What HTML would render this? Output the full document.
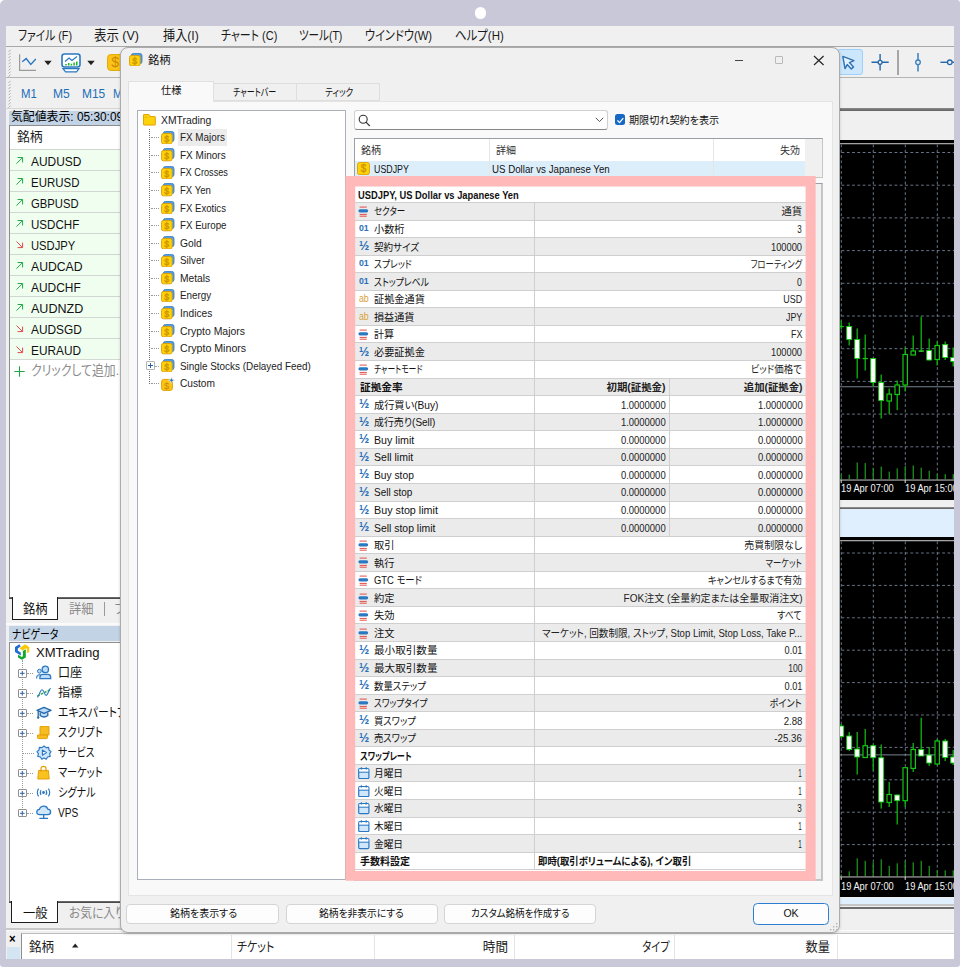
<!DOCTYPE html>
<html lang="ja"><head><meta charset="utf-8"><title>銘柄</title>
<style>
html,body{margin:0;padding:0;background:#fff;}
body{width:960px;height:968px;position:relative;overflow:hidden;font-family:"Liberation Sans", "Noto Sans CJK JP", sans-serif;}
.frame{position:absolute;left:0;top:0;width:960px;height:966.8px;background:#c8c8d8;border-radius:5px 3px 3px 3px;}
.cam{position:absolute;left:474.5px;top:7px;width:11.5px;height:11.5px;border-radius:50%;background:#fff;}
.screen{position:absolute;left:6px;top:26px;width:948px;height:933px;overflow:hidden;background:#f0f0f0;}
.abs{position:absolute;left:-6px;top:-26px;width:960px;height:968px;}
.abs div,.abs svg,.abs span{position:absolute;box-sizing:border-box;}
.t{white-space:nowrap;font-feature-settings:"palt";}
</style></head>
<body>
<div class="frame"></div><div class="cam"></div>
<div class="screen"><div class="abs">
<div style="left:6px;top:26px;width:948px;height:20.5px;background:#f0f0f0;"></div>
<span id="t1" class="t" style="left:17.6px;transform-origin:0 50%;top:27.15px;font-size:13.5px;line-height:18.9px;color:#1a1a1a;transform:scaleX(0.7971);">ファイル (F)</span>
<span id="t2" class="t" style="left:94.3px;transform-origin:0 50%;top:27.15px;font-size:13.5px;line-height:18.9px;color:#1a1a1a;transform:scaleX(0.9224);">表示 (V)</span>
<span id="t3" class="t" style="left:162.6px;transform-origin:0 50%;top:27.15px;font-size:13.5px;line-height:18.9px;color:#1a1a1a;transform:scaleX(0.9000);">挿入(I)</span>
<span id="t4" class="t" style="left:220.7px;transform-origin:0 50%;top:27.15px;font-size:13.5px;line-height:18.9px;color:#1a1a1a;transform:scaleX(0.8116);">チャート (C)</span>
<span id="t5" class="t" style="left:299px;transform-origin:0 50%;top:27.15px;font-size:13.5px;line-height:18.9px;color:#1a1a1a;transform:scaleX(0.7804);">ツール(T)</span>
<span id="t6" class="t" style="left:365px;transform-origin:0 50%;top:27.15px;font-size:13.5px;line-height:18.9px;color:#1a1a1a;transform:scaleX(0.8309);">ウインドウ(W)</span>
<span id="t7" class="t" style="left:455px;transform-origin:0 50%;top:27.15px;font-size:13.5px;line-height:18.9px;color:#1a1a1a;transform:scaleX(0.8474);">ヘルプ(H)</span>
<div style="left:6px;top:46px;width:948px;height:1px;background:#a8a8a8;"></div>
<div style="left:6px;top:47px;width:948px;height:30px;background:#f0f0f0;"></div>
<div style="left:6px;top:77px;width:948px;height:1px;background:#b4b4b4;"></div>
<svg style="left:18px;top:51px;" width="20" height="22" viewBox="0 0 20 22"><path d="M1.6 3.2 V19.4 H18" fill="none" stroke="#9a9a9a" stroke-width="1.2"/><path d="M4.2 10.8 L8.2 7.6 L12.8 13.4 L17.8 8" fill="none" stroke="#2b78c2" stroke-width="1.4"/></svg>
<svg style="left:43.8px;top:60.4px;" width="8" height="6" viewBox="0 0 8 6"><path d="M0.3 0.8 H7.7 L4 5.2 Z" fill="#222"/></svg>
<svg style="left:60.8px;top:52.6px;" width="20" height="20" viewBox="0 0 20 20"><rect x="1" y="1" width="18" height="13" rx="2.5" fill="#fff" stroke="#2b78c2" stroke-width="1.6"/>
<path d="M2 15.6 H18 L15.5 18.8 H4.5 Z" fill="#fff" stroke="#2b78c2" stroke-width="1.2"/>
<path d="M4 8.5 L8 5 L11 7.5 L16 3.5" fill="none" stroke="#2b78c2" stroke-width="1.2"/>
<path d="M5 12.5 V11 M7.7 12.5 V10 M10.4 12.5 V10.8 M13.1 12.5 V9.5 M15.8 12.5 V8.6" stroke="#16b426" stroke-width="1.5"/></svg>
<svg style="left:86.9px;top:60.4px;" width="8" height="6" viewBox="0 0 8 6"><path d="M0.3 0.8 H7.7 L4 5.2 Z" fill="#222"/></svg>
<svg style="left:107px;top:54px;" width="17" height="17" viewBox="0 0 17 17"><rect x="0.6" y="0.6" width="15.8" height="15.8" rx="3" fill="#fcc419" stroke="#e0a800" stroke-width="1"/></svg>
<span id="t8" class="t" style="left:111.2px;transform-origin:0 50%;top:52.8px;font-size:14px;line-height:19.6px;color:#c98a00;transform:scaleX(1.0000);">$</span>
<div style="left:6px;top:78px;width:948px;height:30.5px;background:#f0f0f0;"></div>
<span id="t9" class="t" style="left:20.8px;transform-origin:0 50%;top:84.55px;font-size:13.5px;line-height:18.9px;color:#1d6fb8;transform:scaleX(0.8421);">M1</span>
<span id="t10" class="t" style="left:52.8px;transform-origin:0 50%;top:84.55px;font-size:13.5px;line-height:18.9px;color:#1d6fb8;transform:scaleX(0.8947);">M5</span>
<span id="t11" class="t" style="left:81.6px;transform-origin:0 50%;top:84.55px;font-size:13.5px;line-height:18.9px;color:#1d6fb8;transform:scaleX(0.8846);">M15</span>
<span id="t12" class="t" style="left:113.4px;transform-origin:0 50%;top:84.55px;font-size:13.5px;line-height:18.9px;color:#1d6fb8;transform:scaleX(0.8421);">M3</span>
<svg style="left:8px;top:49px;" width="4" height="28" viewBox="0 0 4 28"><path d="M0.6 2.8 L2.6 0.8" stroke="#a4a4a4" stroke-width="0.9"/><path d="M0.6 5.9 L2.6 3.9" stroke="#a4a4a4" stroke-width="0.9"/><path d="M0.6 9.0 L2.6 7.0" stroke="#a4a4a4" stroke-width="0.9"/><path d="M0.6 12.1 L2.6 10.1" stroke="#a4a4a4" stroke-width="0.9"/><path d="M0.6 15.2 L2.6 13.2" stroke="#a4a4a4" stroke-width="0.9"/><path d="M0.6 18.3 L2.6 16.3" stroke="#a4a4a4" stroke-width="0.9"/><path d="M0.6 21.4 L2.6 19.4" stroke="#a4a4a4" stroke-width="0.9"/><path d="M0.6 24.5 L2.6 22.5" stroke="#a4a4a4" stroke-width="0.9"/><path d="M0.6 27.6 L2.6 25.6" stroke="#a4a4a4" stroke-width="0.9"/></svg>
<svg style="left:8px;top:79.6px;" width="4" height="28" viewBox="0 0 4 28"><path d="M0.6 2.8 L2.6 0.8" stroke="#a4a4a4" stroke-width="0.9"/><path d="M0.6 5.9 L2.6 3.9" stroke="#a4a4a4" stroke-width="0.9"/><path d="M0.6 9.0 L2.6 7.0" stroke="#a4a4a4" stroke-width="0.9"/><path d="M0.6 12.1 L2.6 10.1" stroke="#a4a4a4" stroke-width="0.9"/><path d="M0.6 15.2 L2.6 13.2" stroke="#a4a4a4" stroke-width="0.9"/><path d="M0.6 18.3 L2.6 16.3" stroke="#a4a4a4" stroke-width="0.9"/><path d="M0.6 21.4 L2.6 19.4" stroke="#a4a4a4" stroke-width="0.9"/><path d="M0.6 24.5 L2.6 22.5" stroke="#a4a4a4" stroke-width="0.9"/><path d="M0.6 27.6 L2.6 25.6" stroke="#a4a4a4" stroke-width="0.9"/></svg>
<div style="left:836.5px;top:49.2px;width:26px;height:25.4px;background:#cce6fb;border:1px solid #9dd0fb;border-radius:3px;"></div>
<svg style="left:838.6px;top:51px;" width="21" height="23" viewBox="0 0 22 24"><path d="M4 5.6 L15.6 10 L10.9 12.1 L15.2 16.6 L12.9 18.7 L8.6 14.2 L6.3 18.4 Z" fill="#e4f2fd" stroke="#2f73b4" stroke-width="1.5" stroke-linejoin="round"/></svg>
<svg style="left:870px;top:52px;" width="20" height="20" viewBox="0 0 20 20"><path d="M1.5 10.3 H18.7 M10.1 2 V18.6" stroke="#2468aa" stroke-width="1.4"/><circle cx="10.1" cy="10.3" r="2" fill="#f0f0f0" stroke="#2468aa" stroke-width="1.3"/></svg>
<div style="left:897px;top:50px;width:1.6px;height:24.6px;background:#a6a6a6;"></div>
<svg style="left:908px;top:52px;" width="20" height="20" viewBox="0 0 20 20"><path d="M10 1 V19.4" stroke="#3a7fc0" stroke-width="1.5"/><circle cx="10" cy="10.3" r="2.3" fill="#f0f0f0" stroke="#3a7fc0" stroke-width="1.3"/></svg>
<svg style="left:938px;top:52px;" width="20" height="20" viewBox="0 0 20 20"><path d="M2.4 10.3 H20" stroke="#2468aa" stroke-width="1.4"/><circle cx="11.8" cy="10.3" r="2.3" fill="#f0f0f0" stroke="#2468aa" stroke-width="1.3"/></svg>
<div style="left:6px;top:928px;width:116px;height:1.7px;background:#c8c8c8;"></div>
<div style="left:6px;top:929.7px;width:948px;height:1.3px;background:#fafafa;"></div>
<div style="left:6px;top:931px;width:948px;height:28px;background:#f0f0f0;"></div>
<div style="left:21px;top:933.4px;width:933px;height:26px;background:#fff;border-top:1.5px solid #bdbdbd;border-left:1px solid #8c8c8c;"></div>
<div style="left:7px;top:947.2px;width:13px;height:12px;background:#d3e4f3;"></div>
<span id="t13" class="t" style="left:9.3px;transform-origin:0 50%;top:931.4px;font-size:12px;line-height:16.8px;color:#000;font-weight:700;transform:scaleX(0.9429);">×</span>
<span id="t14" class="t" style="left:28.8px;transform-origin:0 50%;top:937.8px;font-size:13px;line-height:18.2px;color:#222;transform:scaleX(0.9615);">銘柄</span>
<svg style="left:72.3px;top:943.4px;" width="7" height="5" viewBox="0 0 7 5"><path d="M0 4.4 L3.2 0.4 L6.4 4.4 Z" fill="#222"/></svg>
<span id="t15" class="t" style="left:236.7px;transform-origin:0 50%;top:937.8px;font-size:13px;line-height:18.2px;color:#222;transform:scaleX(0.8455);">チケット</span>
<span id="t16" class="t" style="right:451.8px;transform-origin:100% 50%;top:937.8px;font-size:13px;line-height:18.2px;color:#222;transform:scaleX(0.9692);">時間</span>
<span id="t17" class="t" style="right:290.5px;transform-origin:100% 50%;top:937.8px;font-size:13px;line-height:18.2px;color:#222;transform:scaleX(0.7943);">タイプ</span>
<span id="t18" class="t" style="right:130px;transform-origin:100% 50%;top:937.8px;font-size:13px;line-height:18.2px;color:#222;transform:scaleX(0.9385);">数量</span>
<div style="left:230.5px;top:935px;width:1px;height:24px;background:#e4e4e4;"></div>
<div style="left:374.2px;top:935px;width:1px;height:24px;background:#e4e4e4;"></div>
<div style="left:514px;top:935px;width:1px;height:24px;background:#e4e4e4;"></div>
<div style="left:674.2px;top:935px;width:1px;height:24px;background:#e4e4e4;"></div>
<div style="left:836.5px;top:935px;width:1px;height:24px;background:#e4e4e4;"></div>
<div style="left:6px;top:108.3px;width:116px;height:1px;background:#d6d6d6;"></div>
<div style="left:122px;top:108.4px;width:832px;height:2.3px;background:linear-gradient(#8c8c8c,#606060);"></div>
<div style="left:6px;top:110.7px;width:116px;height:817.3px;background:#f0f0f0;"></div>
<div style="left:9px;top:111px;width:112px;height:13.5px;background:#c2d3e5;"></div>
<span id="t19" class="t" style="left:10.5px;transform-origin:0 50%;top:108.95px;font-size:12.5px;line-height:17.5px;color:#000;transform:scaleX(0.9492);">気配値表示: 05:30:09</span>
<div style="left:9.3px;top:124.6px;width:113px;height:473.4px;background:#fff;border:1px solid #8d8d8d;border-bottom:none;"></div>
<span id="t20" class="t" style="left:17px;transform-origin:0 50%;top:129.2px;font-size:12.6px;line-height:17.6px;color:#222;transform:scaleX(1.0200);">銘柄</span>
<div style="left:10.3px;top:149px;width:111px;height:21px;background:#f0fef0;border-top:1px solid #d2d6d2;"></div>
<svg style="left:14.5px;top:156.2px;" width="9" height="9" viewBox="0 0 9 9"><path d="M1.5 7.6 L7.3 1.8 M2.6 1.5 H7.6 V6.5" fill="none" stroke="#22a84a" stroke-width="1"/></svg>
<span id="t21" class="t" style="left:31.2px;transform-origin:0 50%;top:152.65px;font-size:13.5px;line-height:18.9px;color:#111;transform:scaleX(0.8825);">AUDUSD</span>
<div style="left:10.3px;top:170px;width:111px;height:21px;background:#f0fef0;border-top:1px solid #d2d6d2;"></div>
<svg style="left:14.5px;top:177.2px;" width="9" height="9" viewBox="0 0 9 9"><path d="M1.5 7.6 L7.3 1.8 M2.6 1.5 H7.6 V6.5" fill="none" stroke="#22a84a" stroke-width="1"/></svg>
<span id="t22" class="t" style="left:31.2px;transform-origin:0 50%;top:173.65px;font-size:13.5px;line-height:18.9px;color:#111;transform:scaleX(0.8491);">EURUSD</span>
<div style="left:10.3px;top:191px;width:111px;height:21px;background:#f0fef0;border-top:1px solid #d2d6d2;"></div>
<svg style="left:14.5px;top:198.2px;" width="9" height="9" viewBox="0 0 9 9"><path d="M1.5 7.6 L7.3 1.8 M2.6 1.5 H7.6 V6.5" fill="none" stroke="#22a84a" stroke-width="1"/></svg>
<span id="t23" class="t" style="left:31.2px;transform-origin:0 50%;top:194.65px;font-size:13.5px;line-height:18.9px;color:#111;transform:scaleX(0.8351);">GBPUSD</span>
<div style="left:10.3px;top:212px;width:111px;height:21px;background:#f0fef0;border-top:1px solid #d2d6d2;"></div>
<svg style="left:14.5px;top:219.2px;" width="9" height="9" viewBox="0 0 9 9"><path d="M1.5 7.6 L7.3 1.8 M2.6 1.5 H7.6 V6.5" fill="none" stroke="#22a84a" stroke-width="1"/></svg>
<span id="t24" class="t" style="left:31.2px;transform-origin:0 50%;top:215.65px;font-size:13.5px;line-height:18.9px;color:#111;transform:scaleX(0.8571);">USDCHF</span>
<div style="left:10.3px;top:233px;width:111px;height:21px;background:#f0fef0;border-top:1px solid #d2d6d2;"></div>
<svg style="left:14.5px;top:240.2px;" width="9" height="9" viewBox="0 0 9 9"><path d="M1.5 1.5 L7.3 7.3 M2.6 7.6 H7.6 V2.6" fill="none" stroke="#e2474c" stroke-width="1"/></svg>
<span id="t25" class="t" style="left:31.2px;transform-origin:0 50%;top:236.65px;font-size:13.5px;line-height:18.9px;color:#111;transform:scaleX(0.8302);">USDJPY</span>
<div style="left:10.3px;top:254px;width:111px;height:21px;background:#f0fef0;border-top:1px solid #d2d6d2;"></div>
<svg style="left:14.5px;top:261.2px;" width="9" height="9" viewBox="0 0 9 9"><path d="M1.5 7.6 L7.3 1.8 M2.6 1.5 H7.6 V6.5" fill="none" stroke="#22a84a" stroke-width="1"/></svg>
<span id="t26" class="t" style="left:31.2px;transform-origin:0 50%;top:257.65px;font-size:13.5px;line-height:18.9px;color:#111;transform:scaleX(0.9035);">AUDCAD</span>
<div style="left:10.3px;top:275px;width:111px;height:21px;background:#f0fef0;border-top:1px solid #d2d6d2;"></div>
<svg style="left:14.5px;top:282.2px;" width="9" height="9" viewBox="0 0 9 9"><path d="M1.5 7.6 L7.3 1.8 M2.6 1.5 H7.6 V6.5" fill="none" stroke="#22a84a" stroke-width="1"/></svg>
<span id="t27" class="t" style="left:31.2px;transform-origin:0 50%;top:278.65px;font-size:13.5px;line-height:18.9px;color:#111;transform:scaleX(0.8839);">AUDCHF</span>
<div style="left:10.3px;top:296px;width:111px;height:21px;background:#f0fef0;border-top:1px solid #d2d6d2;"></div>
<svg style="left:14.5px;top:303.2px;" width="9" height="9" viewBox="0 0 9 9"><path d="M1.5 7.6 L7.3 1.8 M2.6 1.5 H7.6 V6.5" fill="none" stroke="#22a84a" stroke-width="1"/></svg>
<span id="t28" class="t" style="left:31.2px;transform-origin:0 50%;top:299.65px;font-size:13.5px;line-height:18.9px;color:#111;transform:scaleX(0.9286);">AUDNZD</span>
<div style="left:10.3px;top:317px;width:111px;height:21px;background:#f0fef0;border-top:1px solid #d2d6d2;"></div>
<svg style="left:14.5px;top:324.2px;" width="9" height="9" viewBox="0 0 9 9"><path d="M1.5 1.5 L7.3 7.3 M2.6 7.6 H7.6 V2.6" fill="none" stroke="#e2474c" stroke-width="1"/></svg>
<span id="t29" class="t" style="left:31.2px;transform-origin:0 50%;top:320.65px;font-size:13.5px;line-height:18.9px;color:#111;transform:scaleX(0.8793);">AUDSGD</span>
<div style="left:10.3px;top:338px;width:111px;height:21px;background:#f0fef0;border-top:1px solid #d2d6d2;"></div>
<svg style="left:14.5px;top:345.2px;" width="9" height="9" viewBox="0 0 9 9"><path d="M1.5 1.5 L7.3 7.3 M2.6 7.6 H7.6 V2.6" fill="none" stroke="#e2474c" stroke-width="1"/></svg>
<span id="t30" class="t" style="left:31.2px;transform-origin:0 50%;top:341.65px;font-size:13.5px;line-height:18.9px;color:#111;transform:scaleX(0.8772);">EURAUD</span>
<div style="left:10.3px;top:359px;width:111px;height:1px;background:#d4d9d4;"></div>
<svg style="left:14px;top:365.6px;" width="11" height="11" viewBox="0 0 11 11"><path d="M5.5 0.3 V10.7 M0.3 5.5 H10.7" stroke="#1fa548" stroke-width="1.1"/></svg>
<span id="t31" class="t" style="left:31.2px;transform-origin:0 50%;top:362.15px;font-size:13.5px;line-height:18.9px;color:#8c8c8c;transform:scaleX(0.8796);">クリックして追加...</span>
<div style="left:9.3px;top:597px;width:113px;height:2px;background:linear-gradient(#777,#3a3a3a);"></div>
<div style="left:11.6px;top:597.3px;width:46.6px;height:22.4px;background:#fff;border:1.4px solid #1c1c1c;border-top:none;"></div>
<span id="t32" class="t" style="left:23.3px;transform-origin:0 50%;top:599.7px;font-size:13px;line-height:18.2px;color:#111;transform:scaleX(0.9423);">銘柄</span>
<span id="t33" class="t" style="left:68.8px;transform-origin:0 50%;top:599.7px;font-size:13px;line-height:18.2px;color:#8a8a8a;transform:scaleX(0.9423);">詳細</span>
<div style="left:104.4px;top:602px;width:1px;height:14px;background:#9a9a9a;"></div>
<span id="t34" class="t" style="left:114.5px;transform-origin:0 50%;top:599.7px;font-size:13px;line-height:18.2px;color:#8a8a8a;transform:scaleX(1.0000);">フ</span>
<div style="left:6px;top:622.8px;width:116px;height:1.8px;background:#fbfbfb;"></div>
<div style="left:9px;top:626.4px;width:112px;height:15px;background:#c2d3e5;"></div>
<span id="t35" class="t" style="left:11.5px;transform-origin:0 50%;top:627.05px;font-size:12.5px;line-height:17.5px;color:#000;transform:scaleX(0.7881);">ナビゲータ</span>
<div style="left:9.3px;top:641.6px;width:113px;height:260.4px;background:#fff;border:1px solid #8d8d8d;border-bottom:none;"></div>
<svg style="left:10px;top:640px;" width="30" height="25" viewBox="0 0 30 25"><path d="M9.4 4.2 L5 6.9 V12 L10.8 15.4 V12.5 L7.8 10.7 V8.5 L10.7 6.6 Z" fill="#1c6fd0"/>
<path d="M15 4.2 L9.5 8.2 L12.5 10.6 L15.7 8.6 H17 V12.9 L19.2 12 V6.9 Z" fill="#fcc800"/>
<path d="M15.8 9.3 V17.5 L11.9 19.8 L8 17.5 V14.8 L11.9 16.9 L12.9 16.3 V10.9 Z" fill="#0fa82c"/></svg>
<span id="t36" class="t" style="left:36px;transform-origin:0 50%;top:645.2px;font-size:12.3px;line-height:17.2px;color:#111;transform:scaleX(1.0633);">XMTrading</span>
<div style="left:21.6px;top:660px;width:1px;height:154px;border-left:1px dotted #9a9a9a;"></div>
<div style="left:18.2px;top:669.0px;width:8.6px;height:8.6px;background:#fff;border:1px solid #8f8f8f;border-radius:1px;"></div>
<svg style="left:18.2px;top:669.0px;" width="8.6" height="8.6" viewBox="0 0 8.6 8.6"><path d="M2 4.3 H6.6 M4.3 2 V6.6" stroke="#2b5fa8" stroke-width="1"/></svg>
<div style="left:27.2px;top:673.2px;width:6px;height:1px;border-top:1px dotted #9a9a9a;"></div>
<svg style="left:36px;top:665.4px;" width="16" height="15" viewBox="0 0 16 15"><circle cx="3.4" cy="6.2" r="1.9" fill="#bfdcf7" stroke="#2b78c2" stroke-width="1"/><path d="M0.7 13.6 V12 Q0.7 9.8 3 9.8 H4" fill="#bfdcf7" stroke="#2b78c2" stroke-width="1"/><circle cx="9.3" cy="4.4" r="3.2" fill="#bfdcf7" stroke="#2b78c2" stroke-width="1.3"/><path d="M3.9 13.6 V12.2 Q3.9 9.4 6.8 9.4 H11.8 Q14.7 9.4 14.7 12.2 V13.6 Z" fill="#bfdcf7" stroke="#2b78c2" stroke-width="1.3"/></svg>
<span id="t37" class="t" style="left:57.9px;transform-origin:0 50%;top:664.8px;font-size:12.4px;line-height:17.4px;color:#111;transform:scaleX(0.9760);">口座</span>
<div style="left:18.2px;top:689.0px;width:8.6px;height:8.6px;background:#fff;border:1px solid #8f8f8f;border-radius:1px;"></div>
<svg style="left:18.2px;top:689.0px;" width="8.6" height="8.6" viewBox="0 0 8.6 8.6"><path d="M2 4.3 H6.6 M4.3 2 V6.6" stroke="#2b5fa8" stroke-width="1"/></svg>
<div style="left:27.2px;top:693.2px;width:6px;height:1px;border-top:1px dotted #9a9a9a;"></div>
<svg style="left:36px;top:685.4px;" width="16" height="15" viewBox="0 0 16 15"><path d="M1.4 11 L14.4 4.6" fill="none" stroke="#2bb04c" stroke-width="1.5" stroke-dasharray="2.6 1.2"/><path d="M1.4 12.4 C3.4 10.4 4.2 4.6 6.2 4.8 C8.2 5 8.2 10.6 10.2 10.4 C11.8 10.2 12.6 5 14.6 3.2" fill="none" stroke="#2b78c2" stroke-width="1.1"/></svg>
<span id="t38" class="t" style="left:57.9px;transform-origin:0 50%;top:684.8px;font-size:12.4px;line-height:17.4px;color:#111;transform:scaleX(0.9760);">指標</span>
<div style="left:18.2px;top:708.9px;width:8.6px;height:8.6px;background:#fff;border:1px solid #8f8f8f;border-radius:1px;"></div>
<svg style="left:18.2px;top:708.9px;" width="8.6" height="8.6" viewBox="0 0 8.6 8.6"><path d="M2 4.3 H6.6 M4.3 2 V6.6" stroke="#2b5fa8" stroke-width="1"/></svg>
<div style="left:27.2px;top:713.1px;width:6px;height:1px;border-top:1px dotted #9a9a9a;"></div>
<svg style="left:36px;top:705.3px;" width="16" height="15" viewBox="0 0 16 15"><path d="M4.2 7.4 V10.6 Q8 13.4 11.8 10.6 V7.4 Z" fill="#bfdcf7"/><path d="M1 5.4 L8 2.4 L15 5.4 L8 8.4 Z" fill="#bfdcf7" stroke="#2468aa" stroke-width="1.3" stroke-linejoin="round"/><path d="M4.2 7.4 V10.6 Q8 13.4 11.8 10.6 V7.4" fill="none" stroke="#2468aa" stroke-width="1.3"/><path d="M2.2 6.2 V12.8" stroke="#2468aa" stroke-width="1.3"/><circle cx="2.2" cy="12.6" r="1.2" fill="#2468aa"/></svg>
<span id="t39" class="t" style="left:57.9px;transform-origin:0 50%;top:704.7px;font-size:12.4px;line-height:17.4px;color:#111;transform:scaleX(0.8710);">エキスパートアドバイザ</span>
<div style="left:18.2px;top:728.9px;width:8.6px;height:8.6px;background:#fff;border:1px solid #8f8f8f;border-radius:1px;"></div>
<svg style="left:18.2px;top:728.9px;" width="8.6" height="8.6" viewBox="0 0 8.6 8.6"><path d="M2 4.3 H6.6 M4.3 2 V6.6" stroke="#2b5fa8" stroke-width="1"/></svg>
<div style="left:27.2px;top:733.1px;width:6px;height:1px;border-top:1px dotted #9a9a9a;"></div>
<svg style="left:36px;top:725.3px;" width="16" height="15" viewBox="0 0 16 15"><path d="M4 1.6 H13 V10 H4 Z" fill="#f7bd1f" stroke="#e3a008" stroke-width="1"/><path d="M1.5 10 H11.5 V12.6 Q11.5 13.6 10.4 13.6 H2.6 Q1.5 13.6 1.5 12.6 Z" fill="#f7bd1f" stroke="#e3a008" stroke-width="1"/></svg>
<span id="t40" class="t" style="left:57.9px;transform-origin:0 50%;top:724.7px;font-size:12.4px;line-height:17.4px;color:#111;transform:scaleX(0.8377);">スクリプト</span>
<div style="left:22.6px;top:753.1px;width:11px;height:1px;border-top:1px dotted #9a9a9a;"></div>
<svg style="left:36px;top:745.3px;" width="16" height="15" viewBox="0 0 16 15"><path d="M8 1 L10 2.6 L12.6 2.4 L13 5 L15 6.6 L13.6 8.8 L14.2 11.4 L11.6 12 L10.2 14.2 L8 13 L5.8 14.2 L4.4 12 L1.8 11.4 L2.4 8.8 L1 6.6 L3 5 L3.4 2.4 L6 2.6 Z" fill="#cfe6fb" stroke="#2b78c2" stroke-width="1.2" stroke-linejoin="round"/><path d="M6.4 5 L10.6 7.6 L6.4 10.2 Z" fill="#eef6fd" stroke="#2b78c2" stroke-width="1.1" stroke-linejoin="round"/></svg>
<span id="t41" class="t" style="left:57.9px;transform-origin:0 50%;top:744.7px;font-size:12.4px;line-height:17.4px;color:#111;transform:scaleX(0.7870);">サービス</span>
<div style="left:18.2px;top:768.9px;width:8.6px;height:8.6px;background:#fff;border:1px solid #8f8f8f;border-radius:1px;"></div>
<svg style="left:18.2px;top:768.9px;" width="8.6" height="8.6" viewBox="0 0 8.6 8.6"><path d="M2 4.3 H6.6 M4.3 2 V6.6" stroke="#2b5fa8" stroke-width="1"/></svg>
<div style="left:27.2px;top:773.1px;width:6px;height:1px;border-top:1px dotted #9a9a9a;"></div>
<svg style="left:36px;top:765.3px;" width="16" height="15" viewBox="0 0 16 15"><path d="M2.6 5.4 H12.4 L13.2 14 H1.8 Z" fill="#f9c21e" stroke="#e3a008" stroke-width="1"/><path d="M5 7 V3.6 Q5 1.4 7.5 1.4 Q10 1.4 10 3.6 V7" fill="none" stroke="#e3a008" stroke-width="1.2"/></svg>
<span id="t42" class="t" style="left:57.9px;transform-origin:0 50%;top:764.7px;font-size:12.4px;line-height:17.4px;color:#111;transform:scaleX(0.8222);">マーケット</span>
<div style="left:18.2px;top:788.8px;width:8.6px;height:8.6px;background:#fff;border:1px solid #8f8f8f;border-radius:1px;"></div>
<svg style="left:18.2px;top:788.8px;" width="8.6" height="8.6" viewBox="0 0 8.6 8.6"><path d="M2 4.3 H6.6 M4.3 2 V6.6" stroke="#2b5fa8" stroke-width="1"/></svg>
<div style="left:27.2px;top:793.0px;width:6px;height:1px;border-top:1px dotted #9a9a9a;"></div>
<svg style="left:36px;top:785.2px;" width="16" height="15" viewBox="0 0 16 15"><circle cx="7.5" cy="7.5" r="1.4" fill="#2b78c2"/><path d="M5 5 Q3.6 7.5 5 10 M10 5 Q11.4 7.5 10 10" fill="none" stroke="#2b78c2" stroke-width="1.1"/><path d="M2.6 3.6 Q0 7.5 2.6 11.4 M12.4 3.6 Q15 7.5 12.4 11.4" fill="none" stroke="#2b78c2" stroke-width="1.1"/></svg>
<span id="t43" class="t" style="left:57.9px;transform-origin:0 50%;top:784.6px;font-size:12.4px;line-height:17.4px;color:#111;transform:scaleX(0.8152);">シグナル</span>
<div style="left:18.2px;top:808.8px;width:8.6px;height:8.6px;background:#fff;border:1px solid #8f8f8f;border-radius:1px;"></div>
<svg style="left:18.2px;top:808.8px;" width="8.6" height="8.6" viewBox="0 0 8.6 8.6"><path d="M2 4.3 H6.6 M4.3 2 V6.6" stroke="#2b5fa8" stroke-width="1"/></svg>
<div style="left:27.2px;top:813.0px;width:6px;height:1px;border-top:1px dotted #9a9a9a;"></div>
<svg style="left:36px;top:805.2px;" width="16" height="15" viewBox="0 0 16 15"><path d="M3.6 9.6 Q0.8 9.6 0.8 7 Q0.8 4.6 3.4 4.4 Q4.4 1.2 7.8 1.2 Q11 1.2 11.8 4.2 Q14.6 4.4 14.6 7 Q14.6 9.6 11.8 9.6 Z" fill="#cfe6fb" stroke="#2b78c2" stroke-width="1.3"/><path d="M7.7 9.6 V13 M3.4 13.4 H12" stroke="#2b78c2" stroke-width="1.3"/></svg>
<span id="t44" class="t" style="left:57.9px;transform-origin:0 50%;top:804.6px;font-size:12.4px;line-height:17.4px;color:#111;transform:scaleX(0.8160);">VPS</span>
<div style="left:9.3px;top:901px;width:113px;height:2px;background:linear-gradient(#777,#3a3a3a);"></div>
<div style="left:11.2px;top:901.4px;width:46.6px;height:22px;background:#fff;border:1.4px solid #1c1c1c;border-top:none;"></div>
<span id="t45" class="t" style="left:23px;transform-origin:0 50%;top:904.2px;font-size:13px;line-height:18.2px;color:#111;transform:scaleX(0.9423);">一般</span>
<span id="t46" class="t" style="left:68.8px;transform-origin:0 50%;top:904.2px;font-size:13px;line-height:18.2px;color:#8a8a8a;transform:scaleX(0.9032);">お気に入り</span>
<div style="left:840px;top:110.7px;width:114px;height:29px;background:#f0f0f0;"></div>
<svg style="left:840px;top:139.5px;" width="114" height="360.0" viewBox="0 0 114 360.0"><rect x="0" y="0" width="114" height="360.0" fill="#000"/><rect x="0" y="3.3" width="114" height="0.9" fill="#e8e8e8"/><path d="M1.3 4.5 V340.0" stroke="#7a899d" stroke-width="0.85" stroke-dasharray="2.8 2.5" fill="none"/><path d="M33.3 4.5 V340.0" stroke="#7a899d" stroke-width="0.85" stroke-dasharray="2.8 2.5" fill="none"/><path d="M65.3 4.5 V340.0" stroke="#7a899d" stroke-width="0.85" stroke-dasharray="2.8 2.5" fill="none"/><path d="M97.3 4.5 V340.0" stroke="#7a899d" stroke-width="0.85" stroke-dasharray="2.8 2.5" fill="none"/><path d="M1.5 12.5 H114" stroke="#7a899d" stroke-width="0.85" stroke-dasharray="2.8 2.5" fill="none"/><path d="M1.5 45.2 H114" stroke="#7a899d" stroke-width="0.85" stroke-dasharray="2.8 2.5" fill="none"/><path d="M1.5 77.9 H114" stroke="#7a899d" stroke-width="0.85" stroke-dasharray="2.8 2.5" fill="none"/><path d="M1.5 110.6 H114" stroke="#7a899d" stroke-width="0.85" stroke-dasharray="2.8 2.5" fill="none"/><path d="M1.5 143.3 H114" stroke="#7a899d" stroke-width="0.85" stroke-dasharray="2.8 2.5" fill="none"/><path d="M1.5 176.0 H114" stroke="#7a899d" stroke-width="0.85" stroke-dasharray="2.8 2.5" fill="none"/><path d="M1.5 208.7 H114" stroke="#7a899d" stroke-width="0.85" stroke-dasharray="2.8 2.5" fill="none"/><path d="M1.5 241.4 H114" stroke="#7a899d" stroke-width="0.85" stroke-dasharray="2.8 2.5" fill="none"/><path d="M1.5 274.1 H114" stroke="#7a899d" stroke-width="0.85" stroke-dasharray="2.8 2.5" fill="none"/><path d="M1.5 306.8 H114" stroke="#7a899d" stroke-width="0.85" stroke-dasharray="2.8 2.5" fill="none"/><rect x="0.6" y="334.6" width="1.3" height="4.5" fill="#1f8f1f"/><rect x="8.6" y="334.6" width="1.3" height="4.5" fill="#1f8f1f"/><rect x="16.6" y="322.5" width="1.3" height="16.6" fill="#1f8f1f"/><rect x="24.6" y="323.1" width="1.3" height="16.0" fill="#1f8f1f"/><rect x="32.6" y="328.1" width="1.3" height="11.0" fill="#1f8f1f"/><rect x="40.6" y="326.6" width="1.3" height="12.5" fill="#1f8f1f"/><rect x="48.6" y="331.6" width="1.3" height="7.5" fill="#1f8f1f"/><rect x="56.6" y="328.4" width="1.3" height="10.7" fill="#1f8f1f"/><rect x="64.6" y="326.1" width="1.3" height="13.0" fill="#1f8f1f"/><rect x="72.6" y="325.5" width="1.3" height="13.6" fill="#1f8f1f"/><rect x="80.6" y="327.7" width="1.3" height="11.4" fill="#1f8f1f"/><rect x="88.6" y="330.7" width="1.3" height="8.4" fill="#1f8f1f"/><rect x="96.6" y="334.1" width="1.3" height="5.0" fill="#1f8f1f"/><rect x="104.6" y="334.1" width="1.3" height="5.0" fill="#1f8f1f"/><rect x="112.6" y="334.1" width="1.3" height="5.0" fill="#1f8f1f"/><rect x="0" y="246.4" width="114" height="0.8" fill="#93a2b2"/><rect x="0.55" y="180.5" width="1.3" height="9.0" fill="#10b510"/><rect x="-1.4" y="185.9" width="5.2" height="1.3" fill="#12c812"/><rect x="8.55" y="182.5" width="1.3" height="23.0" fill="#10b510"/><rect x="6.7" y="186.5" width="5" height="13.0" fill="#fff" stroke="#12c812" stroke-width="0.9"/><rect x="16.55" y="188.5" width="1.3" height="50.0" fill="#10b510"/><rect x="14.7" y="199.5" width="5" height="19.0" fill="#fff" stroke="#12c812" stroke-width="0.9"/><rect x="24.55" y="194.5" width="1.3" height="36.0" fill="#10b510"/><rect x="22.6" y="217.9" width="5.2" height="1.3" fill="#12c812"/><rect x="32.55" y="218.5" width="1.3" height="28.0" fill="#10b510"/><rect x="30.7" y="218.5" width="5" height="24.0" fill="#fff" stroke="#12c812" stroke-width="0.9"/><rect x="40.55" y="234.5" width="1.3" height="44.0" fill="#10b510"/><rect x="38.7" y="242.5" width="5" height="18.0" fill="#fff" stroke="#12c812" stroke-width="0.9"/><rect x="48.55" y="248.5" width="1.3" height="25.6" fill="#10b510"/><rect x="47.0" y="254.1" width="4.4" height="6.9" fill="#000" stroke="#12c812" stroke-width="1.2"/><rect x="56.55" y="240.5" width="1.3" height="29.5" fill="#10b510"/><rect x="55.0" y="245.0" width="4.4" height="9.5" fill="#000" stroke="#12c812" stroke-width="1.2"/><rect x="64.55" y="207.5" width="1.3" height="44.0" fill="#10b510"/><rect x="63.0" y="214.5" width="4.4" height="30.5" fill="#000" stroke="#12c812" stroke-width="1.2"/><rect x="72.55" y="195.5" width="1.3" height="19.5" fill="#10b510"/><rect x="71.0" y="211.0" width="4.4" height="4.0" fill="#000" stroke="#12c812" stroke-width="1.2"/><rect x="80.55" y="176.5" width="1.3" height="35.0" fill="#10b510"/><rect x="78.6" y="210.4" width="5.2" height="1.4" fill="#2fd42f"/><rect x="88.55" y="198.5" width="1.3" height="22.0" fill="#10b510"/><rect x="86.7" y="210.5" width="5" height="9.5" fill="#fff" stroke="#12c812" stroke-width="0.9"/><rect x="96.55" y="201.5" width="1.3" height="24.0" fill="#10b510"/><rect x="95.0" y="205.5" width="4.4" height="14.0" fill="#000" stroke="#12c812" stroke-width="1.2"/><rect x="104.55" y="201.5" width="1.3" height="18.5" fill="#10b510"/><rect x="102.7" y="204.5" width="5" height="13.0" fill="#fff" stroke="#12c812" stroke-width="0.9"/><rect x="112.55" y="207.5" width="1.3" height="19.0" fill="#10b510"/><rect x="110.7" y="217.5" width="5" height="4.0" fill="#fff" stroke="#12c812" stroke-width="0.9"/><rect x="0" y="339.5" width="114" height="1.1" fill="#b4b4b4"/><rect x="0.7" y="340.0" width="1" height="3" fill="#e0e0e0"/><rect x="64.7" y="340.0" width="1" height="3" fill="#e0e0e0"/></svg>
<span id="t47" class="t" style="left:840.8px;transform-origin:0 50%;top:481.8px;font-size:10px;line-height:14.0px;color:#f4f4f4;transform:scaleX(0.9298);">19 Apr 07:00</span>
<span id="t48" class="t" style="left:904.9px;transform-origin:0 50%;top:481.8px;font-size:10px;line-height:14.0px;color:#f4f4f4;transform:scaleX(0.9298);">19 Apr 15:00</span>
<div style="left:840px;top:499.5px;width:114px;height:7.5px;background:#f0f0f0;"></div>
<div style="left:840px;top:506.6px;width:114px;height:2px;background:linear-gradient(#9a9a9a,#5a5a5a);"></div>
<div style="left:840px;top:508.6px;width:114px;height:28.4px;background:#dfeffd;"></div>
<svg style="left:840px;top:537px;" width="114" height="360" viewBox="0 0 114 360"><rect x="0" y="0" width="114" height="360" fill="#000"/><rect x="0" y="3.3" width="114" height="0.9" fill="#e8e8e8"/><path d="M1.3 4.5 V339.9" stroke="#7a899d" stroke-width="0.85" stroke-dasharray="2.8 2.5" fill="none"/><path d="M33.3 4.5 V339.9" stroke="#7a899d" stroke-width="0.85" stroke-dasharray="2.8 2.5" fill="none"/><path d="M65.3 4.5 V339.9" stroke="#7a899d" stroke-width="0.85" stroke-dasharray="2.8 2.5" fill="none"/><path d="M97.3 4.5 V339.9" stroke="#7a899d" stroke-width="0.85" stroke-dasharray="2.8 2.5" fill="none"/><path d="M1.5 16.0 H114" stroke="#7a899d" stroke-width="0.85" stroke-dasharray="2.8 2.5" fill="none"/><path d="M1.5 48.4 H114" stroke="#7a899d" stroke-width="0.85" stroke-dasharray="2.8 2.5" fill="none"/><path d="M1.5 80.8 H114" stroke="#7a899d" stroke-width="0.85" stroke-dasharray="2.8 2.5" fill="none"/><path d="M1.5 113.2 H114" stroke="#7a899d" stroke-width="0.85" stroke-dasharray="2.8 2.5" fill="none"/><path d="M1.5 145.6 H114" stroke="#7a899d" stroke-width="0.85" stroke-dasharray="2.8 2.5" fill="none"/><path d="M1.5 178.0 H114" stroke="#7a899d" stroke-width="0.85" stroke-dasharray="2.8 2.5" fill="none"/><path d="M1.5 210.4 H114" stroke="#7a899d" stroke-width="0.85" stroke-dasharray="2.8 2.5" fill="none"/><path d="M1.5 242.8 H114" stroke="#7a899d" stroke-width="0.85" stroke-dasharray="2.8 2.5" fill="none"/><path d="M1.5 275.2 H114" stroke="#7a899d" stroke-width="0.85" stroke-dasharray="2.8 2.5" fill="none"/><path d="M1.5 307.6 H114" stroke="#7a899d" stroke-width="0.85" stroke-dasharray="2.8 2.5" fill="none"/><rect x="0.6" y="337.3" width="1.3" height="2.0" fill="#1f8f1f"/><rect x="8.6" y="334.3" width="1.3" height="5.0" fill="#1f8f1f"/><rect x="16.6" y="321.3" width="1.3" height="18.0" fill="#1f8f1f"/><rect x="24.6" y="323.8" width="1.3" height="15.5" fill="#1f8f1f"/><rect x="32.6" y="325.3" width="1.3" height="14.0" fill="#1f8f1f"/><rect x="40.6" y="322.3" width="1.3" height="17.0" fill="#1f8f1f"/><rect x="48.6" y="328.8" width="1.3" height="10.5" fill="#1f8f1f"/><rect x="56.6" y="326.3" width="1.3" height="13.0" fill="#1f8f1f"/><rect x="64.6" y="323.8" width="1.3" height="15.5" fill="#1f8f1f"/><rect x="72.6" y="325.3" width="1.3" height="14.0" fill="#1f8f1f"/><rect x="80.6" y="323.8" width="1.3" height="15.5" fill="#1f8f1f"/><rect x="88.6" y="328.8" width="1.3" height="10.5" fill="#1f8f1f"/><rect x="96.6" y="333.3" width="1.3" height="6.0" fill="#1f8f1f"/><rect x="104.6" y="333.3" width="1.3" height="6.0" fill="#1f8f1f"/><rect x="112.6" y="333.3" width="1.3" height="6.0" fill="#1f8f1f"/><rect x="0" y="217.5" width="114" height="0.8" fill="#93a2b2"/><rect x="0.55" y="187.0" width="1.3" height="14.0" fill="#10b510"/><rect x="-1.3" y="189.0" width="5" height="10.6" fill="#fff" stroke="#12c812" stroke-width="0.9"/><rect x="8.55" y="195.0" width="1.3" height="19.0" fill="#10b510"/><rect x="6.7" y="199.0" width="5" height="13.5" fill="#fff" stroke="#12c812" stroke-width="0.9"/><rect x="16.55" y="195.0" width="1.3" height="42.5" fill="#10b510"/><rect x="14.7" y="212.0" width="5" height="8.0" fill="#fff" stroke="#12c812" stroke-width="0.9"/><rect x="24.55" y="192.0" width="1.3" height="28.7" fill="#10b510"/><rect x="23.0" y="208.7" width="4.4" height="11.8" fill="#000" stroke="#12c812" stroke-width="1.2"/><rect x="32.55" y="207.5" width="1.3" height="26.2" fill="#10b510"/><rect x="30.7" y="208.7" width="5" height="12.0" fill="#fff" stroke="#12c812" stroke-width="0.9"/><rect x="40.55" y="207.5" width="1.3" height="64.1" fill="#10b510"/><rect x="38.7" y="220.7" width="5" height="44.3" fill="#fff" stroke="#12c812" stroke-width="0.9"/><rect x="48.55" y="245.0" width="1.3" height="25.0" fill="#10b510"/><rect x="47.0" y="257.5" width="4.4" height="8.0" fill="#000" stroke="#12c812" stroke-width="1.2"/><rect x="56.55" y="257.5" width="1.3" height="30.0" fill="#10b510"/><rect x="54.7" y="258.0" width="5" height="5.7" fill="#fff" stroke="#12c812" stroke-width="0.9"/><rect x="64.55" y="230.0" width="1.3" height="40.0" fill="#10b510"/><rect x="63.0" y="230.7" width="4.4" height="33.0" fill="#000" stroke="#12c812" stroke-width="1.2"/><rect x="72.55" y="206.0" width="1.3" height="29.0" fill="#10b510"/><rect x="71.0" y="212.5" width="4.4" height="18.9" fill="#000" stroke="#12c812" stroke-width="1.2"/><rect x="80.55" y="180.7" width="1.3" height="38.3" fill="#10b510"/><rect x="78.7" y="212.5" width="5" height="6.5" fill="#fff" stroke="#12c812" stroke-width="0.9"/><rect x="88.55" y="210.0" width="1.3" height="19.0" fill="#10b510"/><rect x="86.7" y="218.0" width="5" height="8.0" fill="#fff" stroke="#12c812" stroke-width="0.9"/><rect x="96.55" y="202.0" width="1.3" height="26.0" fill="#10b510"/><rect x="95.0" y="204.0" width="4.4" height="23.0" fill="#000" stroke="#12c812" stroke-width="1.2"/><rect x="104.55" y="202.0" width="1.3" height="22.0" fill="#10b510"/><rect x="102.7" y="204.0" width="5" height="16.5" fill="#fff" stroke="#12c812" stroke-width="0.9"/><rect x="112.55" y="213.0" width="1.3" height="15.0" fill="#10b510"/><rect x="110.7" y="220.0" width="5" height="6.0" fill="#fff" stroke="#12c812" stroke-width="0.9"/><rect x="0" y="339.4" width="114" height="1.1" fill="#b4b4b4"/><rect x="0.7" y="339.9" width="1" height="3" fill="#e0e0e0"/><rect x="64.7" y="339.9" width="1" height="3" fill="#e0e0e0"/></svg>
<span id="t49" class="t" style="left:840.8px;transform-origin:0 50%;top:879.6px;font-size:10px;line-height:14.0px;color:#f4f4f4;transform:scaleX(0.9298);">19 Apr 07:00</span>
<span id="t50" class="t" style="left:904.9px;transform-origin:0 50%;top:879.6px;font-size:10px;line-height:14.0px;color:#f4f4f4;transform:scaleX(0.9298);">19 Apr 15:00</span>
<div style="left:840px;top:897px;width:114px;height:1.5px;background:#f0f0f0;"></div>
<div style="left:840px;top:898.4px;width:114px;height:5.6px;background:#dfeffd;"></div>
<div style="left:840px;top:904.3px;width:114px;height:2.2px;background:#c6c6c6;"></div>
<div style="left:840px;top:906.6px;width:114px;height:2.3px;background:#6e6e6e;"></div>
<div style="left:840px;top:908.9px;width:114px;height:20.8px;background:#f0f0f0;"></div>
<div style="left:120px;top:47px;width:720px;height:885.6px;background:#f0f0f0;border:1px solid #ababab;border-radius:8px;box-shadow:0 1px 3px rgba(0,0,0,0.18);"></div>
<svg style="left:129px;top:53px;" width="13.5" height="13.4" viewBox="0 0 13.5 13.4"><rect x="2.3" y="0.45" width="10.7" height="10.3" rx="2.2" fill="#5b9bd5" stroke="#3a82c6" stroke-width="0.9"/><rect x="0.45" y="2.55" width="10.7" height="10.3" rx="2" fill="#fdd20a" stroke="#dd9c00" stroke-width="0.9"/><text x='5.8' y='10.6' font-size='8.8' text-anchor='middle' fill='#cf9400' stroke='#cf9400' stroke-width='0.4' font-family='"Liberation Sans", sans-serif'>$</text></svg>
<span id="t51" class="t" style="left:147.9px;transform-origin:0 50%;top:51.95px;font-size:11.5px;line-height:16.1px;color:#111;transform:scaleX(0.9783);">銘柄</span>
<div style="left:734.5px;top:59.5px;width:8.8px;height:1.3px;background:#444;"></div>
<div style="left:774.5px;top:55.5px;width:8.2px;height:8px;border:1px solid #b9b9b9;border-radius:1px;"></div>
<svg style="left:813px;top:54.6px;" width="12" height="11" viewBox="0 0 12 11"><path d="M1 1 L10.6 10 M10.6 1 L1 10" stroke="#222" stroke-width="1.15"/></svg>
<div style="left:127.5px;top:100.6px;width:705px;height:795.2px;background:#f9f9f9;border:1px solid #e4e4e4;"></div>
<div style="left:214px;top:83px;width:82.6px;height:18px;background:#f0f0f0;border:1px solid #dedede;border-left:none;"></div>
<div style="left:296.6px;top:83px;width:83.2px;height:18px;background:#f0f0f0;border:1px solid #dedede;border-left:none;"></div>
<div style="left:127.5px;top:81px;width:86.6px;height:20.6px;background:#f9f9f9;border:1px solid #e0e0e0;border-bottom:none;"></div>
<span id="t52" class="t" style="left:161px;transform-origin:0 50%;top:83.45px;font-size:10.5px;line-height:14.7px;color:#111;transform:scaleX(0.9762);">仕様</span>
<span id="t53" class="t" style="left:232.5px;transform-origin:0 50%;top:85.05px;font-size:10.5px;line-height:14.7px;color:#111;transform:scaleX(0.7632);">チャートバー</span>
<span id="t54" class="t" style="left:325px;transform-origin:0 50%;top:85.05px;font-size:10.5px;line-height:14.7px;color:#111;transform:scaleX(0.8143);">ティック</span>
<div style="left:137px;top:109.9px;width:208.6px;height:770.4px;background:#fff;border:1px solid #aab0ba;"></div>
<svg style="left:143px;top:114px;" width="12.8" height="11.6" viewBox="0 0 12.8 11.6"><path d="M0.5 0.9 Q0.5 0.5 0.9 0.5 H5.6 Q6.4 0.5 6.6 1.3 L6.9 2.5 H11.9 Q12.3 2.5 12.3 2.9 V10.7 Q12.3 11.1 11.9 11.1 H0.9 Q0.5 11.1 0.5 10.7 Z" fill="#fdd20a" stroke="#dd9c00" stroke-width="0.9"/><path d="M1.4 3.3 H4.6" stroke="#e9b400" stroke-width="0.8"/></svg>
<span id="t55" class="t" style="left:161.4px;transform-origin:0 50%;top:112.75px;font-size:10.5px;line-height:14.7px;color:#222;transform:scaleX(0.9882);">XMTrading</span>
<div style="left:149px;top:128.5px;width:1px;height:255.5px;border-left:1px dotted #6e6e6e;"></div>
<div style="left:178px;top:129.1px;width:49px;height:17px;background:#ececec;"></div>
<div style="left:150.6px;top:137.2px;width:8.4px;height:1px;border-top:1px dotted #9a9a9a;"></div>
<svg style="left:161.25px;top:130.6px;" width="13.5" height="13.4" viewBox="0 0 13.5 13.4"><rect x="2.3" y="0.45" width="10.7" height="10.3" rx="2.2" fill="#5b9bd5" stroke="#3a82c6" stroke-width="0.9"/><rect x="0.45" y="2.55" width="10.7" height="10.3" rx="2" fill="#fdd20a" stroke="#dd9c00" stroke-width="0.9"/><text x='5.8' y='10.6' font-size='8.8' text-anchor='middle' fill='#cf9400' stroke='#cf9400' stroke-width='0.4' font-family='"Liberation Sans", sans-serif'>$</text></svg>
<span id="t56" class="t" style="left:180px;transform-origin:0 50%;top:130.35px;font-size:10.5px;line-height:14.7px;color:#222;transform:scaleX(0.9396);">FX Majors</span>
<div style="left:150.6px;top:154.8px;width:8.4px;height:1px;border-top:1px dotted #9a9a9a;"></div>
<svg style="left:161.25px;top:148.2px;" width="13.5" height="13.4" viewBox="0 0 13.5 13.4"><rect x="2.3" y="0.45" width="10.7" height="10.3" rx="2.2" fill="#5b9bd5" stroke="#3a82c6" stroke-width="0.9"/><rect x="0.45" y="2.55" width="10.7" height="10.3" rx="2" fill="#fdd20a" stroke="#dd9c00" stroke-width="0.9"/><text x='5.8' y='10.6' font-size='8.8' text-anchor='middle' fill='#cf9400' stroke='#cf9400' stroke-width='0.4' font-family='"Liberation Sans", sans-serif'>$</text></svg>
<span id="t57" class="t" style="left:180px;transform-origin:0 50%;top:147.95px;font-size:10.5px;line-height:14.7px;color:#222;transform:scaleX(0.9542);">FX Minors</span>
<div style="left:150.6px;top:172.3px;width:8.4px;height:1px;border-top:1px dotted #9a9a9a;"></div>
<svg style="left:161.25px;top:165.7px;" width="13.5" height="13.4" viewBox="0 0 13.5 13.4"><rect x="2.3" y="0.45" width="10.7" height="10.3" rx="2.2" fill="#5b9bd5" stroke="#3a82c6" stroke-width="0.9"/><rect x="0.45" y="2.55" width="10.7" height="10.3" rx="2" fill="#fdd20a" stroke="#dd9c00" stroke-width="0.9"/><text x='5.8' y='10.6' font-size='8.8' text-anchor='middle' fill='#cf9400' stroke='#cf9400' stroke-width='0.4' font-family='"Liberation Sans", sans-serif'>$</text></svg>
<span id="t58" class="t" style="left:180px;transform-origin:0 50%;top:165.45px;font-size:10.5px;line-height:14.7px;color:#222;transform:scaleX(0.8745);">FX Crosses</span>
<div style="left:150.6px;top:189.9px;width:8.4px;height:1px;border-top:1px dotted #9a9a9a;"></div>
<svg style="left:161.25px;top:183.3px;" width="13.5" height="13.4" viewBox="0 0 13.5 13.4"><rect x="2.3" y="0.45" width="10.7" height="10.3" rx="2.2" fill="#5b9bd5" stroke="#3a82c6" stroke-width="0.9"/><rect x="0.45" y="2.55" width="10.7" height="10.3" rx="2" fill="#fdd20a" stroke="#dd9c00" stroke-width="0.9"/><text x='5.8' y='10.6' font-size='8.8' text-anchor='middle' fill='#cf9400' stroke='#cf9400' stroke-width='0.4' font-family='"Liberation Sans", sans-serif'>$</text></svg>
<span id="t59" class="t" style="left:180px;transform-origin:0 50%;top:183.05px;font-size:10.5px;line-height:14.7px;color:#222;transform:scaleX(0.9118);">FX Yen</span>
<div style="left:150.6px;top:207.5px;width:8.4px;height:1px;border-top:1px dotted #9a9a9a;"></div>
<svg style="left:161.25px;top:200.9px;" width="13.5" height="13.4" viewBox="0 0 13.5 13.4"><rect x="2.3" y="0.45" width="10.7" height="10.3" rx="2.2" fill="#5b9bd5" stroke="#3a82c6" stroke-width="0.9"/><rect x="0.45" y="2.55" width="10.7" height="10.3" rx="2" fill="#fdd20a" stroke="#dd9c00" stroke-width="0.9"/><text x='5.8' y='10.6' font-size='8.8' text-anchor='middle' fill='#cf9400' stroke='#cf9400' stroke-width='0.4' font-family='"Liberation Sans", sans-serif'>$</text></svg>
<span id="t60" class="t" style="left:180px;transform-origin:0 50%;top:200.65px;font-size:10.5px;line-height:14.7px;color:#222;transform:scaleX(0.9160);">FX Exotics</span>
<div style="left:150.6px;top:225.0px;width:8.4px;height:1px;border-top:1px dotted #9a9a9a;"></div>
<svg style="left:161.25px;top:218.4px;" width="13.5" height="13.4" viewBox="0 0 13.5 13.4"><rect x="2.3" y="0.45" width="10.7" height="10.3" rx="2.2" fill="#5b9bd5" stroke="#3a82c6" stroke-width="0.9"/><rect x="0.45" y="2.55" width="10.7" height="10.3" rx="2" fill="#fdd20a" stroke="#dd9c00" stroke-width="0.9"/><text x='5.8' y='10.6' font-size='8.8' text-anchor='middle' fill='#cf9400' stroke='#cf9400' stroke-width='0.4' font-family='"Liberation Sans", sans-serif'>$</text></svg>
<span id="t61" class="t" style="left:180px;transform-origin:0 50%;top:218.15px;font-size:10.5px;line-height:14.7px;color:#222;transform:scaleX(0.9260);">FX Europe</span>
<div style="left:150.6px;top:242.6px;width:8.4px;height:1px;border-top:1px dotted #9a9a9a;"></div>
<svg style="left:161.25px;top:236.0px;" width="13.5" height="13.4" viewBox="0 0 13.5 13.4"><rect x="2.3" y="0.45" width="10.7" height="10.3" rx="2.2" fill="#5b9bd5" stroke="#3a82c6" stroke-width="0.9"/><rect x="0.45" y="2.55" width="10.7" height="10.3" rx="2" fill="#fdd20a" stroke="#dd9c00" stroke-width="0.9"/><text x='5.8' y='10.6' font-size='8.8' text-anchor='middle' fill='#cf9400' stroke='#cf9400' stroke-width='0.4' font-family='"Liberation Sans", sans-serif'>$</text></svg>
<span id="t62" class="t" style="left:180px;transform-origin:0 50%;top:235.75px;font-size:10.5px;line-height:14.7px;color:#222;transform:scaleX(0.9773);">Gold</span>
<div style="left:150.6px;top:260.2px;width:8.4px;height:1px;border-top:1px dotted #9a9a9a;"></div>
<svg style="left:161.25px;top:253.6px;" width="13.5" height="13.4" viewBox="0 0 13.5 13.4"><rect x="2.3" y="0.45" width="10.7" height="10.3" rx="2.2" fill="#5b9bd5" stroke="#3a82c6" stroke-width="0.9"/><rect x="0.45" y="2.55" width="10.7" height="10.3" rx="2" fill="#fdd20a" stroke="#dd9c00" stroke-width="0.9"/><text x='5.8' y='10.6' font-size='8.8' text-anchor='middle' fill='#cf9400' stroke='#cf9400' stroke-width='0.4' font-family='"Liberation Sans", sans-serif'>$</text></svg>
<span id="t63" class="t" style="left:180px;transform-origin:0 50%;top:253.35px;font-size:10.5px;line-height:14.7px;color:#222;transform:scaleX(0.9423);">Silver</span>
<div style="left:150.6px;top:277.8px;width:8.4px;height:1px;border-top:1px dotted #9a9a9a;"></div>
<svg style="left:161.25px;top:271.2px;" width="13.5" height="13.4" viewBox="0 0 13.5 13.4"><rect x="2.3" y="0.45" width="10.7" height="10.3" rx="2.2" fill="#5b9bd5" stroke="#3a82c6" stroke-width="0.9"/><rect x="0.45" y="2.55" width="10.7" height="10.3" rx="2" fill="#fdd20a" stroke="#dd9c00" stroke-width="0.9"/><text x='5.8' y='10.6' font-size='8.8' text-anchor='middle' fill='#cf9400' stroke='#cf9400' stroke-width='0.4' font-family='"Liberation Sans", sans-serif'>$</text></svg>
<span id="t64" class="t" style="left:180px;transform-origin:0 50%;top:270.95px;font-size:10.5px;line-height:14.7px;color:#222;transform:scaleX(0.9774);">Metals</span>
<div style="left:150.6px;top:295.3px;width:8.4px;height:1px;border-top:1px dotted #9a9a9a;"></div>
<svg style="left:161.25px;top:288.7px;" width="13.5" height="13.4" viewBox="0 0 13.5 13.4"><rect x="2.3" y="0.45" width="10.7" height="10.3" rx="2.2" fill="#5b9bd5" stroke="#3a82c6" stroke-width="0.9"/><rect x="0.45" y="2.55" width="10.7" height="10.3" rx="2" fill="#fdd20a" stroke="#dd9c00" stroke-width="0.9"/><text x='5.8' y='10.6' font-size='8.8' text-anchor='middle' fill='#cf9400' stroke='#cf9400' stroke-width='0.4' font-family='"Liberation Sans", sans-serif'>$</text></svg>
<span id="t65" class="t" style="left:180px;transform-origin:0 50%;top:288.45px;font-size:10.5px;line-height:14.7px;color:#222;transform:scaleX(0.9394);">Energy</span>
<div style="left:150.6px;top:312.9px;width:8.4px;height:1px;border-top:1px dotted #9a9a9a;"></div>
<svg style="left:161.25px;top:306.3px;" width="13.5" height="13.4" viewBox="0 0 13.5 13.4"><rect x="2.3" y="0.45" width="10.7" height="10.3" rx="2.2" fill="#5b9bd5" stroke="#3a82c6" stroke-width="0.9"/><rect x="0.45" y="2.55" width="10.7" height="10.3" rx="2" fill="#fdd20a" stroke="#dd9c00" stroke-width="0.9"/><text x='5.8' y='10.6' font-size='8.8' text-anchor='middle' fill='#cf9400' stroke='#cf9400' stroke-width='0.4' font-family='"Liberation Sans", sans-serif'>$</text></svg>
<span id="t66" class="t" style="left:180px;transform-origin:0 50%;top:306.05px;font-size:10.5px;line-height:14.7px;color:#222;transform:scaleX(0.9697);">Indices</span>
<div style="left:150.6px;top:330.5px;width:8.4px;height:1px;border-top:1px dotted #9a9a9a;"></div>
<svg style="left:161.25px;top:323.9px;" width="13.5" height="13.4" viewBox="0 0 13.5 13.4"><rect x="2.3" y="0.45" width="10.7" height="10.3" rx="2.2" fill="#5b9bd5" stroke="#3a82c6" stroke-width="0.9"/><rect x="0.45" y="2.55" width="10.7" height="10.3" rx="2" fill="#fdd20a" stroke="#dd9c00" stroke-width="0.9"/><text x='5.8' y='10.6' font-size='8.8' text-anchor='middle' fill='#cf9400' stroke='#cf9400' stroke-width='0.4' font-family='"Liberation Sans", sans-serif'>$</text></svg>
<span id="t67" class="t" style="left:180px;transform-origin:0 50%;top:323.65px;font-size:10.5px;line-height:14.7px;color:#222;transform:scaleX(0.9938);">Crypto Majors</span>
<div style="left:150.6px;top:348.0px;width:8.4px;height:1px;border-top:1px dotted #9a9a9a;"></div>
<svg style="left:161.25px;top:341.4px;" width="13.5" height="13.4" viewBox="0 0 13.5 13.4"><rect x="2.3" y="0.45" width="10.7" height="10.3" rx="2.2" fill="#5b9bd5" stroke="#3a82c6" stroke-width="0.9"/><rect x="0.45" y="2.55" width="10.7" height="10.3" rx="2" fill="#fdd20a" stroke="#dd9c00" stroke-width="0.9"/><text x='5.8' y='10.6' font-size='8.8' text-anchor='middle' fill='#cf9400' stroke='#cf9400' stroke-width='0.4' font-family='"Liberation Sans", sans-serif'>$</text></svg>
<span id="t68" class="t" style="left:180px;transform-origin:0 50%;top:341.15px;font-size:10.5px;line-height:14.7px;color:#222;transform:scaleX(1.0123);">Crypto Minors</span>
<div style="left:145.6px;top:361.4px;width:9px;height:9px;background:#fff;border:1px solid #b4b4b4;border-radius:1px;"></div>
<svg style="left:145.6px;top:361.4px;" width="9" height="9" viewBox="0 0 9 9"><path d="M2 4.5 H7 M4.5 2 V7" stroke="#2b5fa8" stroke-width="1"/></svg>
<div style="left:155px;top:366.0px;width:4px;height:1px;border-top:1px dotted #a8a8a8;"></div>
<svg style="left:161.25px;top:359.0px;" width="13.5" height="13.4" viewBox="0 0 13.5 13.4"><rect x="2.3" y="0.45" width="10.7" height="10.3" rx="2.2" fill="#5b9bd5" stroke="#3a82c6" stroke-width="0.9"/><rect x="0.45" y="2.55" width="10.7" height="10.3" rx="2" fill="#fdd20a" stroke="#dd9c00" stroke-width="0.9"/><text x='5.8' y='10.6' font-size='8.8' text-anchor='middle' fill='#cf9400' stroke='#cf9400' stroke-width='0.4' font-family='"Liberation Sans", sans-serif'>$</text></svg>
<span id="t69" class="t" style="left:180px;transform-origin:0 50%;top:358.75px;font-size:10.5px;line-height:14.7px;color:#222;transform:scaleX(0.9424);">Single Stocks (Delayed Feed)</span>
<div style="left:150.6px;top:383.2px;width:8.4px;height:1px;border-top:1px dotted #9a9a9a;"></div>
<svg style="left:161px;top:376.6px;" width="14" height="14" viewBox="0 0 14 14"><rect x="0.6" y="2.4" width="10.8" height="11" rx="2.2" fill="#fcc419" stroke="#e2a400" stroke-width="1"/><path d="M10.6 0.2 L11.5 2.4 L13.8 3.2 L11.5 4.1 L10.6 6.4 L9.7 4.1 L7.4 3.2 L9.7 2.4 Z" fill="#2b78c2" stroke="#fff" stroke-width="0.5"/><text x="5.6" y="11.8" font-size="9.5" text-anchor="middle" fill="#c88a00" font-family='"Liberation Sans", sans-serif'>$</text></svg>
<span id="t70" class="t" style="left:180px;transform-origin:0 50%;top:376.35px;font-size:10.5px;line-height:14.7px;color:#222;transform:scaleX(0.9667);">Custom</span>
<div style="left:354px;top:110.1px;width:253.6px;height:19.7px;background:#fff;border:1px solid #d0d0d0;border-bottom:1px solid #868686;border-radius:3px;"></div>
<svg style="left:357.6px;top:113.6px;" width="13" height="13" viewBox="0 0 13 13"><circle cx="5.2" cy="5.2" r="4" fill="none" stroke="#333" stroke-width="1.1"/><path d="M8 8.2 L11.8 12" stroke="#333" stroke-width="1.2"/></svg>
<svg style="left:594.5px;top:117.4px;" width="9" height="6" viewBox="0 0 9 6"><path d="M0.8 0.8 L4.5 4.6 L8.2 0.8" fill="none" stroke="#555" stroke-width="1"/></svg>
<div style="left:614.7px;top:114.3px;width:10.8px;height:11.2px;background:#1668c5;border-radius:2.5px;"></div>
<svg style="left:614.8px;top:114.6px;" width="10.6" height="10.6" viewBox="0 0 10.6 10.6"><path d="M2.4 5.4 L4.5 7.6 L8.3 3.2" fill="none" stroke="#fff" stroke-width="1.3"/></svg>
<span id="t71" class="t" style="left:628.6px;transform-origin:0 50%;top:112.65px;font-size:10.5px;line-height:14.7px;color:#111;transform:scaleX(0.9628);">期限切れ契約を表示</span>
<div style="left:354px;top:138px;width:468.6px;height:39.6px;background:#fff;border:1px solid #9aa0a8;border-right-color:#c6c6c6;border-bottom-color:#c6c6c6;"></div>
<div style="left:805.4px;top:139px;width:16.2px;height:37.6px;background:#f0f0f0;"></div>
<div style="left:355px;top:160.6px;width:450.4px;height:16px;background:#ddeefb;"></div>
<div style="left:489.2px;top:139px;width:1px;height:37.6px;background:#e6e6e6;"></div>
<div style="left:713.4px;top:139px;width:1px;height:37.6px;background:#e6e6e6;"></div>
<span id="t72" class="t" style="left:361.4px;transform-origin:0 50%;top:142.65px;font-size:10.5px;line-height:14.7px;color:#333;transform:scaleX(0.9524);">銘柄</span>
<span id="t73" class="t" style="left:496.3px;transform-origin:0 50%;top:142.65px;font-size:10.5px;line-height:14.7px;color:#333;transform:scaleX(0.9524);">詳細</span>
<span id="t74" class="t" style="right:159.79999999999995px;transform-origin:100% 50%;top:142.65px;font-size:10.5px;line-height:14.7px;color:#333;transform:scaleX(0.9524);">失効</span>
<svg style="left:357.1px;top:162.25px;" width="12.9" height="13.1" viewBox="0 0 12.9 13.1"><rect x="0.45" y="0.45" width="12" height="12.2" rx="2.2" fill="#fdd20a" stroke="#dd9c00" stroke-width="0.9"/><text x='6.5' y='10.1' font-size='10' text-anchor='middle' fill='#cf9400' stroke='#cf9400' stroke-width='0.35' font-family='"Liberation Sans", sans-serif'>$</text></svg>
<span id="t75" class="t" style="left:373.8px;transform-origin:0 50%;top:161.95px;font-size:10.5px;line-height:14.7px;color:#111;transform:scaleX(0.8415);">USDJPY</span>
<span id="t76" class="t" style="left:492.3px;transform-origin:0 50%;top:161.95px;font-size:10.5px;line-height:14.7px;color:#111;transform:scaleX(0.9252);">US Dollar vs Japanese Yen</span>
<div style="left:354px;top:183.3px;width:468.6px;height:697.3px;background:#fff;border:1px solid #9aa0a8;border-right-color:#c6c6c6;border-bottom-color:#c6c6c6;"></div>
<div style="left:806px;top:184.3px;width:15.6px;height:695.3px;background:#f0f0f0;border-right:1px solid #c4c4c4;border-bottom:1px solid #c4c4c4;"></div>
<div style="left:126.3px;top:903.7px;width:152.6px;height:20.6px;background:#fdfdfd;border:1px solid #d4d4d4;border-radius:4px;"></div>
<span id="t77" class="t" style="left:170px;transform-origin:0 50%;top:906.25px;font-size:10.5px;line-height:14.7px;color:#111;transform:scaleX(0.9507);">銘柄を表示する</span>
<div style="left:285.6px;top:903.7px;width:152px;height:20.6px;background:#fdfdfd;border:1px solid #d4d4d4;border-radius:4px;"></div>
<span id="t78" class="t" style="left:318.8px;transform-origin:0 50%;top:906.25px;font-size:10.5px;line-height:14.7px;color:#111;transform:scaleX(0.9286);">銘柄を非表示にする</span>
<div style="left:444.2px;top:903.7px;width:152px;height:20.6px;background:#fdfdfd;border:1px solid #d4d4d4;border-radius:4px;"></div>
<span id="t79" class="t" style="left:471.3px;transform-origin:0 50%;top:906.25px;font-size:10.5px;line-height:14.7px;color:#111;transform:scaleX(0.9055);">カスタム銘柄を作成する</span>
<div style="left:753.3px;top:903.3px;width:75.4px;height:21.4px;background:#fdfdfd;border:1.4px solid #2d7dd2;border-radius:4.5px;"></div>
<span id="t80" class="t" style="left:791px;top:906.45px;font-size:10.5px;line-height:14.7px;color:#111;transform:translateX(-50%) scaleX(1.0000);transform-origin:50% 50%;">OK</span>
<svg style="left:827.6px;top:922.4px;" width="11" height="11" viewBox="0 0 11 11"><rect x="8" y="1" width="1.4" height="1.4" fill="#b4b4b4"/><rect x="5" y="4" width="1.4" height="1.4" fill="#b4b4b4"/><rect x="8" y="4" width="1.4" height="1.4" fill="#b4b4b4"/><rect x="2" y="7" width="1.4" height="1.4" fill="#b4b4b4"/><rect x="5" y="7" width="1.4" height="1.4" fill="#b4b4b4"/><rect x="8" y="7" width="1.4" height="1.4" fill="#b4b4b4"/></svg>
<div style="left:355px;top:186.3px;width:450.6px;height:684.3px;background:#fff;"></div>
<div style="left:355px;top:202.5px;width:450.6px;height:17.56px;background:#ebebeb;"></div>
<div style="left:355px;top:237.62px;width:450.6px;height:17.56px;background:#ebebeb;"></div>
<div style="left:355px;top:272.74px;width:450.6px;height:17.56px;background:#ebebeb;"></div>
<div style="left:355px;top:307.86px;width:450.6px;height:17.56px;background:#ebebeb;"></div>
<div style="left:355px;top:342.98px;width:450.6px;height:17.56px;background:#ebebeb;"></div>
<div style="left:355px;top:378.1px;width:450.6px;height:17.56px;background:#ebebeb;"></div>
<div style="left:355px;top:413.22px;width:450.6px;height:17.56px;background:#ebebeb;"></div>
<div style="left:355px;top:448.34px;width:450.6px;height:17.56px;background:#ebebeb;"></div>
<div style="left:355px;top:483.46px;width:450.6px;height:17.56px;background:#ebebeb;"></div>
<div style="left:355px;top:518.58px;width:450.6px;height:17.56px;background:#ebebeb;"></div>
<div style="left:355px;top:553.7px;width:450.6px;height:17.56px;background:#ebebeb;"></div>
<div style="left:355px;top:588.82px;width:450.6px;height:17.56px;background:#ebebeb;"></div>
<div style="left:355px;top:623.94px;width:450.6px;height:17.56px;background:#ebebeb;"></div>
<div style="left:355px;top:659.06px;width:450.6px;height:17.56px;background:#ebebeb;"></div>
<div style="left:355px;top:694.18px;width:450.6px;height:17.56px;background:#ebebeb;"></div>
<div style="left:355px;top:729.3px;width:450.6px;height:17.56px;background:#ebebeb;"></div>
<div style="left:355px;top:764.42px;width:450.6px;height:17.56px;background:#ebebeb;"></div>
<div style="left:355px;top:799.54px;width:450.6px;height:17.56px;background:#ebebeb;"></div>
<div style="left:355px;top:834.66px;width:450.6px;height:17.56px;background:#ebebeb;"></div>
<div style="left:355px;top:202.0px;width:450.6px;height:1px;background:#cfcfcf;"></div>
<span id="t81" class="t" style="left:358.2px;transform-origin:0 50%;top:187.55px;font-size:10.5px;line-height:14.7px;color:#111;font-weight:700;transform:scaleX(0.8895);">USDJPY, US Dollar vs Japanese Yen</span>
<div style="left:355px;top:219.56px;width:450.6px;height:1px;background:#cfcfcf;"></div>
<div style="left:534px;top:202.5px;width:1px;height:17.56px;background:#cfcfcf;"></div>
<svg style="left:358.4px;top:205.28px;" width="11" height="12" viewBox="0 0 11 12"><rect x="1.6" y="1.6" width="7.2" height="0.95" fill="#e2463c"/><rect x="0.4" y="4.3" width="9.8" height="3.1" rx="1.55" fill="#2b78c2"/><rect x="1.6" y="8.9" width="7.2" height="0.95" fill="#e2463c"/><rect x="1.6" y="10.7" width="7.2" height="0.95" fill="#e2463c"/></svg>
<span id="t82" class="t" style="left:374.1px;transform-origin:0 50%;top:204.43px;font-size:10.5px;line-height:14.7px;color:#111;transform:scaleX(0.8077);">セクター</span>
<span id="t83" class="t" style="right:157.79999999999995px;transform-origin:100% 50%;top:204.43px;font-size:10.5px;line-height:14.7px;color:#222;transform:scaleX(0.9810);">通貨</span>
<div style="left:355px;top:237.12px;width:450.6px;height:1px;background:#cfcfcf;"></div>
<div style="left:534px;top:220.06px;width:1px;height:17.56px;background:#cfcfcf;"></div>
<span id="t84" class="t" style="left:358.8px;transform-origin:0 50%;top:223.24px;font-size:8.4px;line-height:11.8px;color:#2a70b8;font-weight:700;transform:scaleX(1.0444);">01</span>
<span id="t85" class="t" style="left:374.1px;transform-origin:0 50%;top:221.99px;font-size:10.5px;line-height:14.7px;color:#111;transform:scaleX(0.9688);">小数桁</span>
<span id="t86" class="t" style="right:157.79999999999995px;transform-origin:100% 50%;top:221.99px;font-size:10.5px;line-height:14.7px;color:#222;transform:scaleX(0.7667);">3</span>
<div style="left:355px;top:254.68px;width:450.6px;height:1px;background:#cfcfcf;"></div>
<div style="left:534px;top:237.62px;width:1px;height:17.56px;background:#cfcfcf;"></div>
<span id="t87" class="t" style="left:358.5px;transform-origin:0 50%;top:238.2px;font-size:12px;line-height:16.8px;color:#2a70b8;font-weight:700;transform:scaleX(1.0200);">½</span>
<span id="t88" class="t" style="left:374.1px;transform-origin:0 50%;top:239.55px;font-size:10.5px;line-height:14.7px;color:#111;transform:scaleX(0.9080);">契約サイズ</span>
<span id="t89" class="t" style="right:157.79999999999995px;transform-origin:100% 50%;top:239.55px;font-size:10.5px;line-height:14.7px;color:#222;transform:scaleX(0.8857);">100000</span>
<div style="left:355px;top:272.24px;width:450.6px;height:1px;background:#cfcfcf;"></div>
<div style="left:534px;top:255.18px;width:1px;height:17.56px;background:#cfcfcf;"></div>
<span id="t90" class="t" style="left:358.8px;transform-origin:0 50%;top:258.36px;font-size:8.4px;line-height:11.8px;color:#2a70b8;font-weight:700;transform:scaleX(1.0444);">01</span>
<span id="t91" class="t" style="left:374.1px;transform-origin:0 50%;top:257.11px;font-size:10.5px;line-height:14.7px;color:#111;transform:scaleX(0.8422);">スプレッド</span>
<span id="t92" class="t" style="right:157.79999999999995px;transform-origin:100% 50%;top:257.11px;font-size:10.5px;line-height:14.7px;color:#222;transform:scaleX(0.7923);">フローティング</span>
<div style="left:355px;top:289.8px;width:450.6px;height:1px;background:#cfcfcf;"></div>
<div style="left:534px;top:272.74px;width:1px;height:17.56px;background:#cfcfcf;"></div>
<span id="t93" class="t" style="left:358.8px;transform-origin:0 50%;top:275.92px;font-size:8.4px;line-height:11.8px;color:#2a70b8;font-weight:700;transform:scaleX(1.0444);">01</span>
<span id="t94" class="t" style="left:374.1px;transform-origin:0 50%;top:274.67px;font-size:10.5px;line-height:14.7px;color:#111;transform:scaleX(0.8415);">ストップレベル</span>
<span id="t95" class="t" style="right:157.79999999999995px;transform-origin:100% 50%;top:274.67px;font-size:10.5px;line-height:14.7px;color:#222;transform:scaleX(0.8333);">0</span>
<div style="left:355px;top:307.36px;width:450.6px;height:1px;background:#cfcfcf;"></div>
<div style="left:534px;top:290.3px;width:1px;height:17.56px;background:#cfcfcf;"></div>
<span id="t96" class="t" style="left:358.8px;transform-origin:0 50%;top:291.43px;font-size:10.5px;line-height:14.7px;color:#d9a23c;transform:scaleX(0.8333);">ab</span>
<span id="t97" class="t" style="left:374.1px;transform-origin:0 50%;top:292.23px;font-size:10.5px;line-height:14.7px;color:#111;transform:scaleX(0.9679);">証拠金通貨</span>
<span id="t98" class="t" style="right:157.79999999999995px;transform-origin:100% 50%;top:292.23px;font-size:10.5px;line-height:14.7px;color:#222;transform:scaleX(0.8523);">USD</span>
<div style="left:355px;top:324.92px;width:450.6px;height:1px;background:#cfcfcf;"></div>
<div style="left:534px;top:307.86px;width:1px;height:17.56px;background:#cfcfcf;"></div>
<span id="t99" class="t" style="left:358.8px;transform-origin:0 50%;top:308.99px;font-size:10.5px;line-height:14.7px;color:#d9a23c;transform:scaleX(0.8333);">ab</span>
<span id="t100" class="t" style="left:374.1px;transform-origin:0 50%;top:309.79px;font-size:10.5px;line-height:14.7px;color:#111;transform:scaleX(0.9619);">損益通貨</span>
<span id="t101" class="t" style="right:157.79999999999995px;transform-origin:100% 50%;top:309.79px;font-size:10.5px;line-height:14.7px;color:#222;transform:scaleX(0.8421);">JPY</span>
<div style="left:355px;top:342.48px;width:450.6px;height:1px;background:#cfcfcf;"></div>
<div style="left:534px;top:325.42px;width:1px;height:17.56px;background:#cfcfcf;"></div>
<svg style="left:358.4px;top:328.2px;" width="11" height="12" viewBox="0 0 11 12"><rect x="1.6" y="1.6" width="7.2" height="0.95" fill="#e2463c"/><rect x="0.4" y="4.3" width="9.8" height="3.1" rx="1.55" fill="#2b78c2"/><rect x="1.6" y="8.9" width="7.2" height="0.95" fill="#e2463c"/><rect x="1.6" y="10.7" width="7.2" height="0.95" fill="#e2463c"/></svg>
<span id="t102" class="t" style="left:374.1px;transform-origin:0 50%;top:327.35px;font-size:10.5px;line-height:14.7px;color:#111;transform:scaleX(0.9524);">計算</span>
<span id="t103" class="t" style="right:157.79999999999995px;transform-origin:100% 50%;top:327.35px;font-size:10.5px;line-height:14.7px;color:#222;transform:scaleX(0.8462);">FX</span>
<div style="left:355px;top:360.04px;width:450.6px;height:1px;background:#cfcfcf;"></div>
<div style="left:534px;top:342.98px;width:1px;height:17.56px;background:#cfcfcf;"></div>
<span id="t104" class="t" style="left:358.5px;transform-origin:0 50%;top:343.56px;font-size:12px;line-height:16.8px;color:#2a70b8;font-weight:700;transform:scaleX(1.0200);">½</span>
<span id="t105" class="t" style="left:374.1px;transform-origin:0 50%;top:344.91px;font-size:10.5px;line-height:14.7px;color:#111;transform:scaleX(0.9679);">必要証拠金</span>
<span id="t106" class="t" style="right:157.79999999999995px;transform-origin:100% 50%;top:344.91px;font-size:10.5px;line-height:14.7px;color:#222;transform:scaleX(0.8857);">100000</span>
<div style="left:355px;top:377.6px;width:450.6px;height:1px;background:#cfcfcf;"></div>
<div style="left:534px;top:360.54px;width:1px;height:17.56px;background:#cfcfcf;"></div>
<svg style="left:358.4px;top:363.32px;" width="11" height="12" viewBox="0 0 11 12"><rect x="1.6" y="1.6" width="7.2" height="0.95" fill="#e2463c"/><rect x="0.4" y="4.3" width="9.8" height="3.1" rx="1.55" fill="#2b78c2"/><rect x="1.6" y="8.9" width="7.2" height="0.95" fill="#e2463c"/><rect x="1.6" y="10.7" width="7.2" height="0.95" fill="#e2463c"/></svg>
<span id="t107" class="t" style="left:374.1px;transform-origin:0 50%;top:362.47px;font-size:10.5px;line-height:14.7px;color:#111;transform:scaleX(0.7446);">チャートモード</span>
<span id="t108" class="t" style="right:157.79999999999995px;transform-origin:100% 50%;top:362.47px;font-size:10.5px;line-height:14.7px;color:#222;transform:scaleX(0.9000);">ビッド価格で</span>
<div style="left:355px;top:395.16px;width:450.6px;height:1px;background:#cfcfcf;"></div>
<div style="left:534px;top:378.1px;width:1px;height:17.56px;background:#cfcfcf;"></div>
<div style="left:669.2px;top:378.1px;width:1px;height:17.56px;background:#cfcfcf;"></div>
<span id="t109" class="t" style="left:359.8px;transform-origin:0 50%;top:380.03px;font-size:10.5px;line-height:14.7px;color:#111;font-weight:700;transform:scaleX(1.0167);">証拠金率</span>
<span id="t110" class="t" style="right:294.1px;transform-origin:100% 50%;top:380.03px;font-size:10.5px;line-height:14.7px;color:#222;font-weight:700;transform:scaleX(0.9917);">初期(証拠金)</span>
<span id="t111" class="t" style="right:157.79999999999995px;transform-origin:100% 50%;top:380.03px;font-size:10.5px;line-height:14.7px;color:#222;font-weight:700;transform:scaleX(0.9867);">追加(証拠金)</span>
<div style="left:355px;top:412.72px;width:450.6px;height:1px;background:#cfcfcf;"></div>
<div style="left:534px;top:395.66px;width:1px;height:17.56px;background:#cfcfcf;"></div>
<div style="left:669.2px;top:395.66px;width:1px;height:17.56px;background:#cfcfcf;"></div>
<span id="t112" class="t" style="left:358.5px;transform-origin:0 50%;top:396.24px;font-size:12px;line-height:16.8px;color:#2a70b8;font-weight:700;transform:scaleX(1.0200);">½</span>
<span id="t113" class="t" style="left:374.1px;transform-origin:0 50%;top:397.59px;font-size:10.5px;line-height:14.7px;color:#111;transform:scaleX(0.9701);">成行買い(Buy)</span>
<span id="t114" class="t" style="right:294.1px;transform-origin:100% 50%;top:397.59px;font-size:10.5px;line-height:14.7px;color:#222;transform:scaleX(0.9000);">1.0000000</span>
<span id="t115" class="t" style="right:157.79999999999995px;transform-origin:100% 50%;top:397.59px;font-size:10.5px;line-height:14.7px;color:#222;transform:scaleX(0.9000);">1.0000000</span>
<div style="left:355px;top:430.28px;width:450.6px;height:1px;background:#cfcfcf;"></div>
<div style="left:534px;top:413.22px;width:1px;height:17.56px;background:#cfcfcf;"></div>
<div style="left:669.2px;top:413.22px;width:1px;height:17.56px;background:#cfcfcf;"></div>
<span id="t116" class="t" style="left:358.5px;transform-origin:0 50%;top:413.8px;font-size:12px;line-height:16.8px;color:#2a70b8;font-weight:700;transform:scaleX(1.0200);">½</span>
<span id="t117" class="t" style="left:374.1px;transform-origin:0 50%;top:415.15px;font-size:10.5px;line-height:14.7px;color:#111;transform:scaleX(0.9462);">成行売り(Sell)</span>
<span id="t118" class="t" style="right:294.1px;transform-origin:100% 50%;top:415.15px;font-size:10.5px;line-height:14.7px;color:#222;transform:scaleX(0.9000);">1.0000000</span>
<span id="t119" class="t" style="right:157.79999999999995px;transform-origin:100% 50%;top:415.15px;font-size:10.5px;line-height:14.7px;color:#222;transform:scaleX(0.9000);">1.0000000</span>
<div style="left:355px;top:447.84px;width:450.6px;height:1px;background:#cfcfcf;"></div>
<div style="left:534px;top:430.78px;width:1px;height:17.56px;background:#cfcfcf;"></div>
<div style="left:669.2px;top:430.78px;width:1px;height:17.56px;background:#cfcfcf;"></div>
<span id="t120" class="t" style="left:358.5px;transform-origin:0 50%;top:431.36px;font-size:12px;line-height:16.8px;color:#2a70b8;font-weight:700;transform:scaleX(1.0200);">½</span>
<span id="t121" class="t" style="left:374.1px;transform-origin:0 50%;top:432.71px;font-size:10.5px;line-height:14.7px;color:#111;transform:scaleX(1.0150);">Buy limit</span>
<span id="t122" class="t" style="right:294.1px;transform-origin:100% 50%;top:432.71px;font-size:10.5px;line-height:14.7px;color:#222;transform:scaleX(0.9000);">0.0000000</span>
<span id="t123" class="t" style="right:157.79999999999995px;transform-origin:100% 50%;top:432.71px;font-size:10.5px;line-height:14.7px;color:#222;transform:scaleX(0.9000);">0.0000000</span>
<div style="left:355px;top:465.4px;width:450.6px;height:1px;background:#cfcfcf;"></div>
<div style="left:534px;top:448.34px;width:1px;height:17.56px;background:#cfcfcf;"></div>
<div style="left:669.2px;top:448.34px;width:1px;height:17.56px;background:#cfcfcf;"></div>
<span id="t124" class="t" style="left:358.5px;transform-origin:0 50%;top:448.92px;font-size:12px;line-height:16.8px;color:#2a70b8;font-weight:700;transform:scaleX(1.0200);">½</span>
<span id="t125" class="t" style="left:374.1px;transform-origin:0 50%;top:450.27px;font-size:10.5px;line-height:14.7px;color:#111;transform:scaleX(1.0000);">Sell limit</span>
<span id="t126" class="t" style="right:294.1px;transform-origin:100% 50%;top:450.27px;font-size:10.5px;line-height:14.7px;color:#222;transform:scaleX(0.9000);">0.0000000</span>
<span id="t127" class="t" style="right:157.79999999999995px;transform-origin:100% 50%;top:450.27px;font-size:10.5px;line-height:14.7px;color:#222;transform:scaleX(0.9000);">0.0000000</span>
<div style="left:355px;top:482.96px;width:450.6px;height:1px;background:#cfcfcf;"></div>
<div style="left:534px;top:465.9px;width:1px;height:17.56px;background:#cfcfcf;"></div>
<div style="left:669.2px;top:465.9px;width:1px;height:17.56px;background:#cfcfcf;"></div>
<span id="t128" class="t" style="left:358.5px;transform-origin:0 50%;top:466.48px;font-size:12px;line-height:16.8px;color:#2a70b8;font-weight:700;transform:scaleX(1.0200);">½</span>
<span id="t129" class="t" style="left:374.1px;transform-origin:0 50%;top:467.83px;font-size:10.5px;line-height:14.7px;color:#111;transform:scaleX(0.9756);">Buy stop</span>
<span id="t130" class="t" style="right:294.1px;transform-origin:100% 50%;top:467.83px;font-size:10.5px;line-height:14.7px;color:#222;transform:scaleX(0.9000);">0.0000000</span>
<span id="t131" class="t" style="right:157.79999999999995px;transform-origin:100% 50%;top:467.83px;font-size:10.5px;line-height:14.7px;color:#222;transform:scaleX(0.9000);">0.0000000</span>
<div style="left:355px;top:500.52px;width:450.6px;height:1px;background:#cfcfcf;"></div>
<div style="left:534px;top:483.46px;width:1px;height:17.56px;background:#cfcfcf;"></div>
<div style="left:669.2px;top:483.46px;width:1px;height:17.56px;background:#cfcfcf;"></div>
<span id="t132" class="t" style="left:358.5px;transform-origin:0 50%;top:484.04px;font-size:12px;line-height:16.8px;color:#2a70b8;font-weight:700;transform:scaleX(1.0200);">½</span>
<span id="t133" class="t" style="left:374.1px;transform-origin:0 50%;top:485.39px;font-size:10.5px;line-height:14.7px;color:#111;transform:scaleX(0.9500);">Sell stop</span>
<span id="t134" class="t" style="right:294.1px;transform-origin:100% 50%;top:485.39px;font-size:10.5px;line-height:14.7px;color:#222;transform:scaleX(0.9000);">0.0000000</span>
<span id="t135" class="t" style="right:157.79999999999995px;transform-origin:100% 50%;top:485.39px;font-size:10.5px;line-height:14.7px;color:#222;transform:scaleX(0.9000);">0.0000000</span>
<div style="left:355px;top:518.08px;width:450.6px;height:1px;background:#cfcfcf;"></div>
<div style="left:534px;top:501.02px;width:1px;height:17.56px;background:#cfcfcf;"></div>
<div style="left:669.2px;top:501.02px;width:1px;height:17.56px;background:#cfcfcf;"></div>
<span id="t136" class="t" style="left:358.5px;transform-origin:0 50%;top:501.6px;font-size:12px;line-height:16.8px;color:#2a70b8;font-weight:700;transform:scaleX(1.0200);">½</span>
<span id="t137" class="t" style="left:374.1px;transform-origin:0 50%;top:502.95px;font-size:10.5px;line-height:14.7px;color:#111;transform:scaleX(1.0242);">Buy stop limit</span>
<span id="t138" class="t" style="right:294.1px;transform-origin:100% 50%;top:502.95px;font-size:10.5px;line-height:14.7px;color:#222;transform:scaleX(0.9000);">0.0000000</span>
<span id="t139" class="t" style="right:157.79999999999995px;transform-origin:100% 50%;top:502.95px;font-size:10.5px;line-height:14.7px;color:#222;transform:scaleX(0.9000);">0.0000000</span>
<div style="left:355px;top:535.64px;width:450.6px;height:1px;background:#cfcfcf;"></div>
<div style="left:534px;top:518.58px;width:1px;height:17.56px;background:#cfcfcf;"></div>
<div style="left:669.2px;top:518.58px;width:1px;height:17.56px;background:#cfcfcf;"></div>
<span id="t140" class="t" style="left:358.5px;transform-origin:0 50%;top:519.16px;font-size:12px;line-height:16.8px;color:#2a70b8;font-weight:700;transform:scaleX(1.0200);">½</span>
<span id="t141" class="t" style="left:374.1px;transform-origin:0 50%;top:520.51px;font-size:10.5px;line-height:14.7px;color:#111;transform:scaleX(0.9919);">Sell stop limit</span>
<span id="t142" class="t" style="right:294.1px;transform-origin:100% 50%;top:520.51px;font-size:10.5px;line-height:14.7px;color:#222;transform:scaleX(0.9000);">0.0000000</span>
<span id="t143" class="t" style="right:157.79999999999995px;transform-origin:100% 50%;top:520.51px;font-size:10.5px;line-height:14.7px;color:#222;transform:scaleX(0.9000);">0.0000000</span>
<div style="left:355px;top:553.2px;width:450.6px;height:1px;background:#cfcfcf;"></div>
<div style="left:534px;top:536.14px;width:1px;height:17.56px;background:#cfcfcf;"></div>
<svg style="left:358.4px;top:538.92px;" width="11" height="12" viewBox="0 0 11 12"><rect x="1.6" y="1.6" width="7.2" height="0.95" fill="#e2463c"/><rect x="0.4" y="4.3" width="9.8" height="3.1" rx="1.55" fill="#2b78c2"/><rect x="1.6" y="8.9" width="7.2" height="0.95" fill="#e2463c"/><rect x="1.6" y="10.7" width="7.2" height="0.95" fill="#e2463c"/></svg>
<span id="t144" class="t" style="left:374.1px;transform-origin:0 50%;top:538.07px;font-size:10.5px;line-height:14.7px;color:#111;transform:scaleX(0.9762);">取引</span>
<span id="t145" class="t" style="right:157.79999999999995px;transform-origin:100% 50%;top:538.07px;font-size:10.5px;line-height:14.7px;color:#222;transform:scaleX(0.9467);">売買制限なし</span>
<div style="left:355px;top:570.76px;width:450.6px;height:1px;background:#cfcfcf;"></div>
<div style="left:534px;top:553.7px;width:1px;height:17.56px;background:#cfcfcf;"></div>
<svg style="left:358.4px;top:556.48px;" width="11" height="12" viewBox="0 0 11 12"><rect x="1.6" y="1.6" width="7.2" height="0.95" fill="#e2463c"/><rect x="0.4" y="4.3" width="9.8" height="3.1" rx="1.55" fill="#2b78c2"/><rect x="1.6" y="8.9" width="7.2" height="0.95" fill="#e2463c"/><rect x="1.6" y="10.7" width="7.2" height="0.95" fill="#e2463c"/></svg>
<span id="t146" class="t" style="left:374.1px;transform-origin:0 50%;top:555.63px;font-size:10.5px;line-height:14.7px;color:#111;transform:scaleX(0.9762);">執行</span>
<span id="t147" class="t" style="right:157.79999999999995px;transform-origin:100% 50%;top:555.63px;font-size:10.5px;line-height:14.7px;color:#222;transform:scaleX(0.7935);">マーケット</span>
<div style="left:355px;top:588.32px;width:450.6px;height:1px;background:#cfcfcf;"></div>
<div style="left:534px;top:571.26px;width:1px;height:17.56px;background:#cfcfcf;"></div>
<svg style="left:358.4px;top:574.04px;" width="11" height="12" viewBox="0 0 11 12"><rect x="1.6" y="1.6" width="7.2" height="0.95" fill="#e2463c"/><rect x="0.4" y="4.3" width="9.8" height="3.1" rx="1.55" fill="#2b78c2"/><rect x="1.6" y="8.9" width="7.2" height="0.95" fill="#e2463c"/><rect x="1.6" y="10.7" width="7.2" height="0.95" fill="#e2463c"/></svg>
<span id="t148" class="t" style="left:374.1px;transform-origin:0 50%;top:573.19px;font-size:10.5px;line-height:14.7px;color:#111;transform:scaleX(0.8963);">GTC モード</span>
<span id="t149" class="t" style="right:157.79999999999995px;transform-origin:100% 50%;top:573.19px;font-size:10.5px;line-height:14.7px;color:#222;transform:scaleX(0.8804);">キャンセルするまで有効</span>
<div style="left:355px;top:605.88px;width:450.6px;height:1px;background:#cfcfcf;"></div>
<div style="left:534px;top:588.82px;width:1px;height:17.56px;background:#cfcfcf;"></div>
<svg style="left:358.4px;top:591.6px;" width="11" height="12" viewBox="0 0 11 12"><rect x="1.6" y="1.6" width="7.2" height="0.95" fill="#e2463c"/><rect x="0.4" y="4.3" width="9.8" height="3.1" rx="1.55" fill="#2b78c2"/><rect x="1.6" y="8.9" width="7.2" height="0.95" fill="#e2463c"/><rect x="1.6" y="10.7" width="7.2" height="0.95" fill="#e2463c"/></svg>
<span id="t150" class="t" style="left:374.1px;transform-origin:0 50%;top:590.75px;font-size:10.5px;line-height:14.7px;color:#111;transform:scaleX(0.9762);">約定</span>
<span id="t151" class="t" style="right:157.79999999999995px;transform-origin:100% 50%;top:590.75px;font-size:10.5px;line-height:14.7px;color:#222;transform:scaleX(0.9543);">FOK注文 (全量約定または全量取消注文)</span>
<div style="left:355px;top:623.44px;width:450.6px;height:1px;background:#cfcfcf;"></div>
<div style="left:534px;top:606.38px;width:1px;height:17.56px;background:#cfcfcf;"></div>
<svg style="left:358.4px;top:609.16px;" width="11" height="12" viewBox="0 0 11 12"><rect x="1.6" y="1.6" width="7.2" height="0.95" fill="#e2463c"/><rect x="0.4" y="4.3" width="9.8" height="3.1" rx="1.55" fill="#2b78c2"/><rect x="1.6" y="8.9" width="7.2" height="0.95" fill="#e2463c"/><rect x="1.6" y="10.7" width="7.2" height="0.95" fill="#e2463c"/></svg>
<span id="t152" class="t" style="left:374.1px;transform-origin:0 50%;top:608.31px;font-size:10.5px;line-height:14.7px;color:#111;transform:scaleX(0.9762);">失効</span>
<span id="t153" class="t" style="right:157.79999999999995px;transform-origin:100% 50%;top:608.31px;font-size:10.5px;line-height:14.7px;color:#222;transform:scaleX(0.8552);">すべて</span>
<div style="left:355px;top:641.0px;width:450.6px;height:1px;background:#cfcfcf;"></div>
<div style="left:534px;top:623.94px;width:1px;height:17.56px;background:#cfcfcf;"></div>
<svg style="left:358.4px;top:626.72px;" width="11" height="12" viewBox="0 0 11 12"><rect x="1.6" y="1.6" width="7.2" height="0.95" fill="#e2463c"/><rect x="0.4" y="4.3" width="9.8" height="3.1" rx="1.55" fill="#2b78c2"/><rect x="1.6" y="8.9" width="7.2" height="0.95" fill="#e2463c"/><rect x="1.6" y="10.7" width="7.2" height="0.95" fill="#e2463c"/></svg>
<span id="t154" class="t" style="left:374.1px;transform-origin:0 50%;top:625.87px;font-size:10.5px;line-height:14.7px;color:#111;transform:scaleX(0.9762);">注文</span>
<span id="t155" class="t" style="right:157.79999999999995px;transform-origin:100% 50%;top:625.87px;font-size:10.5px;line-height:14.7px;color:#222;transform:scaleX(0.9123);">マーケット, 回数制限, ストップ, Stop Limit, Stop Loss, Take P...</span>
<div style="left:355px;top:658.56px;width:450.6px;height:1px;background:#cfcfcf;"></div>
<div style="left:534px;top:641.5px;width:1px;height:17.56px;background:#cfcfcf;"></div>
<span id="t156" class="t" style="left:358.5px;transform-origin:0 50%;top:642.08px;font-size:12px;line-height:16.8px;color:#2a70b8;font-weight:700;transform:scaleX(1.0200);">½</span>
<span id="t157" class="t" style="left:374.1px;transform-origin:0 50%;top:643.43px;font-size:10.5px;line-height:14.7px;color:#111;transform:scaleX(1.0079);">最小取引数量</span>
<span id="t158" class="t" style="right:157.79999999999995px;transform-origin:100% 50%;top:643.43px;font-size:10.5px;line-height:14.7px;color:#222;transform:scaleX(0.8750);">0.01</span>
<div style="left:355px;top:676.12px;width:450.6px;height:1px;background:#cfcfcf;"></div>
<div style="left:534px;top:659.06px;width:1px;height:17.56px;background:#cfcfcf;"></div>
<span id="t159" class="t" style="left:358.5px;transform-origin:0 50%;top:659.64px;font-size:12px;line-height:16.8px;color:#2a70b8;font-weight:700;transform:scaleX(1.0200);">½</span>
<span id="t160" class="t" style="left:374.1px;transform-origin:0 50%;top:660.99px;font-size:10.5px;line-height:14.7px;color:#111;transform:scaleX(1.0079);">最大取引数量</span>
<span id="t161" class="t" style="right:157.79999999999995px;transform-origin:100% 50%;top:660.99px;font-size:10.5px;line-height:14.7px;color:#222;transform:scaleX(0.8111);">100</span>
<div style="left:355px;top:693.68px;width:450.6px;height:1px;background:#cfcfcf;"></div>
<div style="left:534px;top:676.62px;width:1px;height:17.56px;background:#cfcfcf;"></div>
<span id="t162" class="t" style="left:358.5px;transform-origin:0 50%;top:677.2px;font-size:12px;line-height:16.8px;color:#2a70b8;font-weight:700;transform:scaleX(1.0200);">½</span>
<span id="t163" class="t" style="left:374.1px;transform-origin:0 50%;top:678.55px;font-size:10.5px;line-height:14.7px;color:#111;transform:scaleX(0.8966);">数量ステップ</span>
<span id="t164" class="t" style="right:157.79999999999995px;transform-origin:100% 50%;top:678.55px;font-size:10.5px;line-height:14.7px;color:#222;transform:scaleX(0.8750);">0.01</span>
<div style="left:355px;top:711.24px;width:450.6px;height:1px;background:#cfcfcf;"></div>
<div style="left:534px;top:694.18px;width:1px;height:17.56px;background:#cfcfcf;"></div>
<svg style="left:358.4px;top:696.96px;" width="11" height="12" viewBox="0 0 11 12"><rect x="1.6" y="1.6" width="7.2" height="0.95" fill="#e2463c"/><rect x="0.4" y="4.3" width="9.8" height="3.1" rx="1.55" fill="#2b78c2"/><rect x="1.6" y="8.9" width="7.2" height="0.95" fill="#e2463c"/><rect x="1.6" y="10.7" width="7.2" height="0.95" fill="#e2463c"/></svg>
<span id="t165" class="t" style="left:374.1px;transform-origin:0 50%;top:696.11px;font-size:10.5px;line-height:14.7px;color:#111;transform:scaleX(0.8246);">スワップタイプ</span>
<span id="t166" class="t" style="right:157.79999999999995px;transform-origin:100% 50%;top:696.11px;font-size:10.5px;line-height:14.7px;color:#222;transform:scaleX(0.8757);">ポイント</span>
<div style="left:355px;top:728.8px;width:450.6px;height:1px;background:#cfcfcf;"></div>
<div style="left:534px;top:711.74px;width:1px;height:17.56px;background:#cfcfcf;"></div>
<span id="t167" class="t" style="left:358.5px;transform-origin:0 50%;top:712.32px;font-size:12px;line-height:16.8px;color:#2a70b8;font-weight:700;transform:scaleX(1.0200);">½</span>
<span id="t168" class="t" style="left:374.1px;transform-origin:0 50%;top:713.67px;font-size:10.5px;line-height:14.7px;color:#111;transform:scaleX(0.8872);">買スワップ</span>
<span id="t169" class="t" style="right:157.79999999999995px;transform-origin:100% 50%;top:713.67px;font-size:10.5px;line-height:14.7px;color:#222;transform:scaleX(0.9200);">2.88</span>
<div style="left:355px;top:746.36px;width:450.6px;height:1px;background:#cfcfcf;"></div>
<div style="left:534px;top:729.3px;width:1px;height:17.56px;background:#cfcfcf;"></div>
<span id="t170" class="t" style="left:358.5px;transform-origin:0 50%;top:729.88px;font-size:12px;line-height:16.8px;color:#2a70b8;font-weight:700;transform:scaleX(1.0200);">½</span>
<span id="t171" class="t" style="left:374.1px;transform-origin:0 50%;top:731.23px;font-size:10.5px;line-height:14.7px;color:#111;transform:scaleX(0.8872);">売スワップ</span>
<span id="t172" class="t" style="right:157.79999999999995px;transform-origin:100% 50%;top:731.23px;font-size:10.5px;line-height:14.7px;color:#222;transform:scaleX(0.9233);">-25.36</span>
<div style="left:355px;top:763.92px;width:450.6px;height:1px;background:#cfcfcf;"></div>
<div style="left:534px;top:746.86px;width:1px;height:17.56px;background:#cfcfcf;"></div>
<span id="t173" class="t" style="left:359.8px;transform-origin:0 50%;top:748.79px;font-size:10.5px;line-height:14.7px;color:#111;font-weight:700;transform:scaleX(0.7701);">スワップレート</span>
<div style="left:355px;top:781.48px;width:450.6px;height:1px;background:#cfcfcf;"></div>
<div style="left:534px;top:764.42px;width:1px;height:17.56px;background:#cfcfcf;"></div>
<svg style="left:358px;top:767.0px;" width="12" height="12.4" viewBox="0 0 12 12.4"><rect x="0.7" y="1.6" width="10.2" height="10" rx="1.2" fill="#cfe6fb" stroke="#2b78c2" stroke-width="1.2"/><rect x="1.3" y="2.2" width="9" height="2.6" fill="#fff"/><path d="M0.7 5.2 H10.9" stroke="#2b78c2" stroke-width="1"/><path d="M3.4 0.3 V2.6 M8.2 0.3 V2.6" stroke="#2b78c2" stroke-width="1.2"/></svg>
<span id="t174" class="t" style="left:374.1px;transform-origin:0 50%;top:766.35px;font-size:10.5px;line-height:14.7px;color:#111;transform:scaleX(0.9219);">月曜日</span>
<span id="t175" class="t" style="right:157.79999999999995px;transform-origin:100% 50%;top:766.35px;font-size:10.5px;line-height:14.7px;color:#222;transform:scaleX(0.6000);">1</span>
<div style="left:355px;top:799.04px;width:450.6px;height:1px;background:#cfcfcf;"></div>
<div style="left:534px;top:781.98px;width:1px;height:17.56px;background:#cfcfcf;"></div>
<svg style="left:358px;top:784.56px;" width="12" height="12.4" viewBox="0 0 12 12.4"><rect x="0.7" y="1.6" width="10.2" height="10" rx="1.2" fill="#cfe6fb" stroke="#2b78c2" stroke-width="1.2"/><rect x="1.3" y="2.2" width="9" height="2.6" fill="#fff"/><path d="M0.7 5.2 H10.9" stroke="#2b78c2" stroke-width="1"/><path d="M3.4 0.3 V2.6 M8.2 0.3 V2.6" stroke="#2b78c2" stroke-width="1.2"/></svg>
<span id="t176" class="t" style="left:374.1px;transform-origin:0 50%;top:783.91px;font-size:10.5px;line-height:14.7px;color:#111;transform:scaleX(0.9219);">火曜日</span>
<span id="t177" class="t" style="right:157.79999999999995px;transform-origin:100% 50%;top:783.91px;font-size:10.5px;line-height:14.7px;color:#222;transform:scaleX(0.6000);">1</span>
<div style="left:355px;top:816.6px;width:450.6px;height:1px;background:#cfcfcf;"></div>
<div style="left:534px;top:799.54px;width:1px;height:17.56px;background:#cfcfcf;"></div>
<svg style="left:358px;top:802.12px;" width="12" height="12.4" viewBox="0 0 12 12.4"><rect x="0.7" y="1.6" width="10.2" height="10" rx="1.2" fill="#cfe6fb" stroke="#2b78c2" stroke-width="1.2"/><rect x="1.3" y="2.2" width="9" height="2.6" fill="#fff"/><path d="M0.7 5.2 H10.9" stroke="#2b78c2" stroke-width="1"/><path d="M3.4 0.3 V2.6 M8.2 0.3 V2.6" stroke="#2b78c2" stroke-width="1.2"/></svg>
<span id="t178" class="t" style="left:374.1px;transform-origin:0 50%;top:801.47px;font-size:10.5px;line-height:14.7px;color:#111;transform:scaleX(0.9219);">水曜日</span>
<span id="t179" class="t" style="right:157.79999999999995px;transform-origin:100% 50%;top:801.47px;font-size:10.5px;line-height:14.7px;color:#222;transform:scaleX(0.7667);">3</span>
<div style="left:355px;top:834.16px;width:450.6px;height:1px;background:#cfcfcf;"></div>
<div style="left:534px;top:817.1px;width:1px;height:17.56px;background:#cfcfcf;"></div>
<svg style="left:358px;top:819.68px;" width="12" height="12.4" viewBox="0 0 12 12.4"><rect x="0.7" y="1.6" width="10.2" height="10" rx="1.2" fill="#cfe6fb" stroke="#2b78c2" stroke-width="1.2"/><rect x="1.3" y="2.2" width="9" height="2.6" fill="#fff"/><path d="M0.7 5.2 H10.9" stroke="#2b78c2" stroke-width="1"/><path d="M3.4 0.3 V2.6 M8.2 0.3 V2.6" stroke="#2b78c2" stroke-width="1.2"/></svg>
<span id="t180" class="t" style="left:374.1px;transform-origin:0 50%;top:819.03px;font-size:10.5px;line-height:14.7px;color:#111;transform:scaleX(0.9219);">木曜日</span>
<span id="t181" class="t" style="right:157.79999999999995px;transform-origin:100% 50%;top:819.03px;font-size:10.5px;line-height:14.7px;color:#222;transform:scaleX(0.6000);">1</span>
<div style="left:355px;top:851.72px;width:450.6px;height:1px;background:#cfcfcf;"></div>
<div style="left:534px;top:834.66px;width:1px;height:17.56px;background:#cfcfcf;"></div>
<svg style="left:358px;top:837.24px;" width="12" height="12.4" viewBox="0 0 12 12.4"><rect x="0.7" y="1.6" width="10.2" height="10" rx="1.2" fill="#cfe6fb" stroke="#2b78c2" stroke-width="1.2"/><rect x="1.3" y="2.2" width="9" height="2.6" fill="#fff"/><path d="M0.7 5.2 H10.9" stroke="#2b78c2" stroke-width="1"/><path d="M3.4 0.3 V2.6 M8.2 0.3 V2.6" stroke="#2b78c2" stroke-width="1.2"/></svg>
<span id="t182" class="t" style="left:374.1px;transform-origin:0 50%;top:836.59px;font-size:10.5px;line-height:14.7px;color:#111;transform:scaleX(0.9219);">金曜日</span>
<span id="t183" class="t" style="right:157.79999999999995px;transform-origin:100% 50%;top:836.59px;font-size:10.5px;line-height:14.7px;color:#222;transform:scaleX(0.6000);">1</span>
<div style="left:355px;top:869.28px;width:450.6px;height:1px;background:#cfcfcf;"></div>
<div style="left:534px;top:852.22px;width:1px;height:17.56px;background:#cfcfcf;"></div>
<span id="t184" class="t" style="left:359.8px;transform-origin:0 50%;top:854.15px;font-size:10.5px;line-height:14.7px;color:#111;font-weight:700;transform:scaleX(0.9528);">手数料設定</span>
<span id="t185" class="t" style="left:538.2px;transform-origin:0 50%;top:854.15px;font-size:10.5px;line-height:14.7px;color:#111;font-weight:700;transform:scaleX(0.8936);">即時(取引ボリュームによる), イン取引</span>
<svg style="left:345px;top:176px;" width="471" height="705" viewBox="0 0 471 705"><path fill-rule="evenodd" fill="#ffb9b9" d="M0.5 0.1 H470.7 V704.7 H0.5 Z M10.2 10.6 V695 H460.6 V10.6 Z"/></svg>
</div></div>
</body></html>
